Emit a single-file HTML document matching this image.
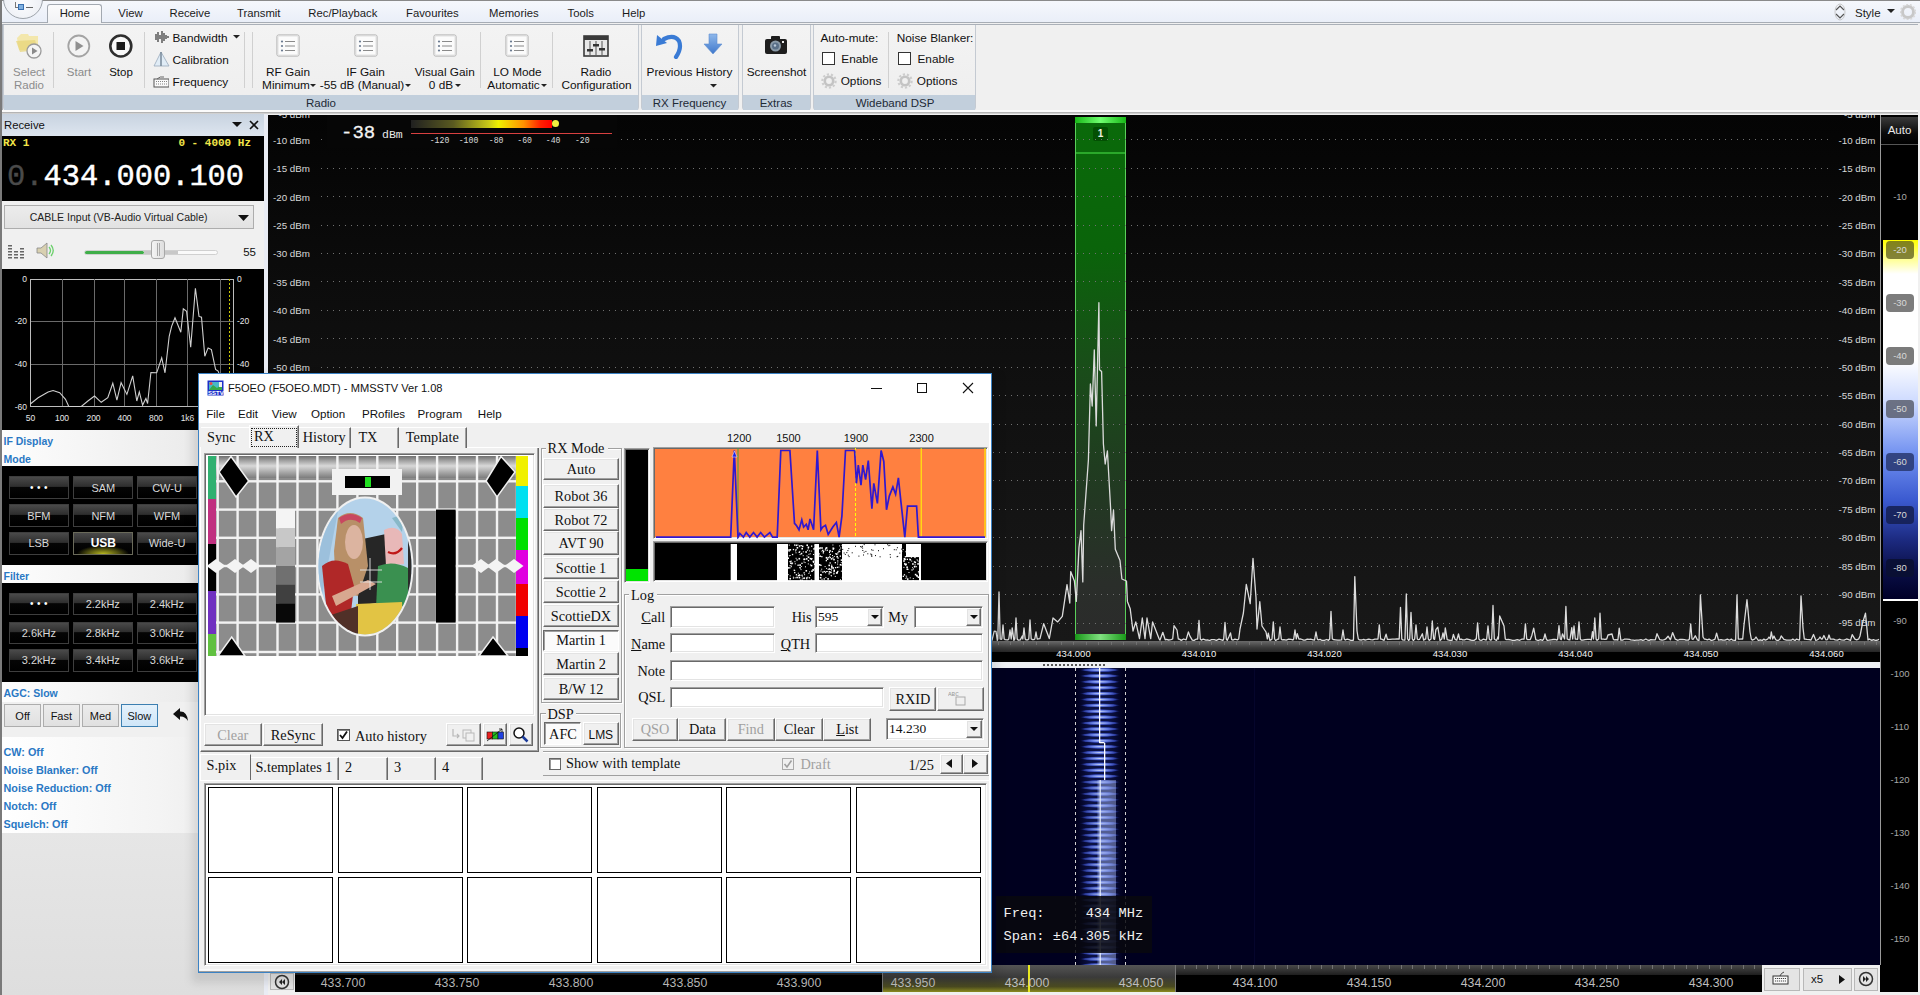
<!DOCTYPE html><html><head><meta charset="utf-8"><style>
html,body{margin:0;padding:0}
body{width:1920px;height:995px;overflow:hidden;position:relative;background:#f0f0f0;font-family:"Liberation Sans",sans-serif;}
div{position:absolute;box-sizing:border-box}
span{position:static}
</style></head><body>
<div style="left:0px;top:0px;width:1920px;height:23px;background:linear-gradient(#f6f8fc,#e9eef8);"></div>
<div style="left:0px;top:0px;width:1920px;height:1px;background:#8a8a8a;"></div>
<div style="left:0px;top:22px;width:1920px;height:1px;background:#a7adb5;"></div>
<div style="left:3px;top:-21px;width:40px;height:40px;border-radius:50%;border:1px solid #9da3aa;background:radial-gradient(circle at 50% 60%,#fbfcfe,#e6e9f0);box-sizing:border-box"></div>
<div style="left:15px;top:2px;width:9px;height:6px;border-left:1px solid #777;border-bottom:1px solid #777;"></div>
<div style="left:18px;top:4px;width:6px;height:6px;background:#7fb0e0;border:1px solid #3a70b0;"></div>
<div style="left:26px;top:7px;width:7px;height:1px;background:#666;"></div>
<div style="left:47px;top:4px;width:55px;height:20px;background:linear-gradient(#fbfbfc,#f1f2f4);border:1px solid #a3a9b1;border-bottom:none;border-radius:3px 3px 0 0;"></div>
<div style="left:-75.25px;top:3.0px;width:300px;height:20px;line-height:20px;font-size:11.3px;text-align:center;white-space:nowrap;color:#1b1b1b;">Home</div>
<div style="left:-19.5px;top:3.0px;width:300px;height:20px;line-height:20px;font-size:11.3px;text-align:center;white-space:nowrap;color:#1b1b1b;">View</div>
<div style="left:39.900000000000006px;top:3.0px;width:300px;height:20px;line-height:20px;font-size:11.3px;text-align:center;white-space:nowrap;color:#1b1b1b;">Receive</div>
<div style="left:108.75px;top:3.0px;width:300px;height:20px;line-height:20px;font-size:11.3px;text-align:center;white-space:nowrap;color:#1b1b1b;">Transmit</div>
<div style="left:192.89999999999998px;top:3.0px;width:300px;height:20px;line-height:20px;font-size:11.3px;text-align:center;white-space:nowrap;color:#1b1b1b;">Rec/Playback</div>
<div style="left:282.4px;top:3.0px;width:300px;height:20px;line-height:20px;font-size:11.3px;text-align:center;white-space:nowrap;color:#1b1b1b;">Favourites</div>
<div style="left:363.79999999999995px;top:3.0px;width:300px;height:20px;line-height:20px;font-size:11.3px;text-align:center;white-space:nowrap;color:#1b1b1b;">Memories</div>
<div style="left:430.79999999999995px;top:3.0px;width:300px;height:20px;line-height:20px;font-size:11.3px;text-align:center;white-space:nowrap;color:#1b1b1b;">Tools</div>
<div style="left:483.70000000000005px;top:3.0px;width:300px;height:20px;line-height:20px;font-size:11.3px;text-align:center;white-space:nowrap;color:#1b1b1b;">Help</div>
<svg style="position:absolute;left:1834px;top:3px;" width="12" height="18" viewBox="0 0 12 18"><path d="M2 7 L6 3 L10 7" fill="none" stroke="#555" stroke-width="1.2"/><path d="M2 11 L6 15 L10 11" fill="none" stroke="#555" stroke-width="1.2"/><ellipse cx="6" cy="9" rx="5" ry="8" fill="none" stroke="#bbb" stroke-width="0.8"/></svg>
<div style="left:1855px;top:2.5px;height:20px;line-height:20px;font-size:11.5px;white-space:nowrap;color:#1b1b1b;">Style</div>
<svg style="position:absolute;left:1887px;top:9px;" width="8" height="5" viewBox="0 0 8 5"><path d="M0 0 L8 0 L4 4 Z" fill="#222"/></svg>
<svg style="position:absolute;left:1900px;top:4px;" width="16" height="16" viewBox="0 0 16 16"><circle cx="8" cy="8" r="5.5" fill="none" stroke="#c8c8c8" stroke-width="3"/><circle cx="8" cy="8" r="7.5" fill="none" stroke="#d8d8d8" stroke-width="1.5" stroke-dasharray="2 1.7"/></svg>
<div style="left:1px;top:23px;width:1918px;height:89px;background:#f0f0f0;"></div>
<div style="left:2px;top:24px;width:1916px;height:1px;background:#aab0b8;"></div>
<div style="left:2px;top:24px;width:1px;height:88px;background:#aab0b8;"></div>
<div style="left:2px;top:110px;width:1916px;height:2px;background:#fbfbfb;"></div>
<div style="left:2px;top:112px;width:1916px;height:1px;background:#b4b4b4;"></div>
<div style="left:2px;top:113px;width:1916px;height:1px;background:#d0d0d0;"></div>
<div style="left:3px;top:25px;width:635.6px;height:85px;border:1px solid #c4cad2;border-top:none;border-radius:0 0 3px 3px;background:linear-gradient(#f3f3f3,#eeeeee);"></div>
<div style="left:4px;top:95px;width:633.6px;height:14.5px;background:#c2cfdc;"></div>
<div style="left:171.0px;top:93.0px;width:300px;height:20px;line-height:20px;font-size:11.5px;text-align:center;white-space:nowrap;color:#1e2a36;">Radio</div>
<div style="left:641px;top:25px;width:97.5px;height:85px;border:1px solid #c4cad2;border-top:none;border-radius:0 0 3px 3px;background:linear-gradient(#f3f3f3,#eeeeee);"></div>
<div style="left:642px;top:95px;width:95.5px;height:14.5px;background:#c2cfdc;"></div>
<div style="left:539.5px;top:93.0px;width:300px;height:20px;line-height:20px;font-size:11.5px;text-align:center;white-space:nowrap;color:#1e2a36;">RX Frequency</div>
<div style="left:741.5px;top:25px;width:69.0px;height:85px;border:1px solid #c4cad2;border-top:none;border-radius:0 0 3px 3px;background:linear-gradient(#f3f3f3,#eeeeee);"></div>
<div style="left:742.5px;top:95px;width:67.0px;height:14.5px;background:#c2cfdc;"></div>
<div style="left:626.0px;top:93.0px;width:300px;height:20px;line-height:20px;font-size:11.5px;text-align:center;white-space:nowrap;color:#1e2a36;">Extras</div>
<div style="left:813.3px;top:25px;width:162.5px;height:85px;border:1px solid #c4cad2;border-top:none;border-radius:0 0 3px 3px;background:linear-gradient(#f3f3f3,#eeeeee);"></div>
<div style="left:814.3px;top:95px;width:160.5px;height:14.5px;background:#c2cfdc;"></div>
<div style="left:745.0px;top:93.0px;width:300px;height:20px;line-height:20px;font-size:11.5px;text-align:center;white-space:nowrap;color:#1e2a36;">Wideband DSP</div>
<div style="left:53px;top:32px;width:1px;height:56px;background:#d0d0d0;"></div>
<div style="left:144px;top:32px;width:1px;height:56px;background:#d0d0d0;"></div>
<div style="left:244px;top:32px;width:1px;height:56px;background:#d0d0d0;"></div>
<div style="left:252px;top:32px;width:1px;height:56px;background:#d0d0d0;"></div>
<div style="left:480px;top:32px;width:1px;height:56px;background:#d0d0d0;"></div>
<div style="left:552px;top:32px;width:1px;height:56px;background:#d0d0d0;"></div>
<svg style="position:absolute;left:15px;top:30px;" width="28" height="30" viewBox="0 0 28 30"><path d="M2 8 L6 4 L13 4 L14 6 L23 6 L23 20 L4 20 Z" fill="#f2e49a" opacity="0.8"/><path d="M1 11 L20 10 L23 20 L5 22 Z" fill="#e8d67a" opacity="0.75"/><circle cx="19" cy="21" r="7" fill="#f4f4f4" stroke="#9a9a9a" stroke-width="1.3"/><path d="M17 17.5 L22.5 21 L17 24.5 Z" fill="#8a8a8a"/></svg>
<div style="left:-121.0px;top:62.0px;width:300px;height:20px;line-height:20px;font-size:11.5px;text-align:center;white-space:nowrap;color:#8c8c8c;">Select</div>
<div style="left:-121.0px;top:75.0px;width:300px;height:20px;line-height:20px;font-size:11.5px;text-align:center;white-space:nowrap;color:#8c8c8c;">Radio</div>
<svg style="position:absolute;left:66px;top:34px;" width="26" height="26" viewBox="0 0 26 26"><circle cx="12.8" cy="12" r="10.5" fill="#f4f4f4" stroke="#a4a4a4" stroke-width="1.8"/><path d="M9.5 7 L17.5 12 L9.5 17 Z" fill="#909090"/></svg>
<div style="left:-71.0px;top:62.0px;width:300px;height:20px;line-height:20px;font-size:11.5px;text-align:center;white-space:nowrap;color:#8a8a8a;">Start</div>
<svg style="position:absolute;left:108px;top:34px;" width="26" height="26" viewBox="0 0 26 26"><circle cx="12.8" cy="12" r="10.5" fill="#f8f8f8" stroke="#2e2e2e" stroke-width="2.6"/><rect x="8.5" y="8" width="8.5" height="8" fill="#1a1a1a"/></svg>
<div style="left:-29.0px;top:62.0px;width:300px;height:20px;line-height:20px;font-size:11.5px;text-align:center;white-space:nowrap;color:#111;">Stop</div>
<svg style="position:absolute;left:153px;top:30px;" width="17" height="14" viewBox="0 0 17 14"><path d="M1 7 V7 M3 4 V10 M5 2 V12 M7 5 V9 M9 1 V13 M11 3 V11 M13 5 V9 M15 6 V8" stroke="#333" stroke-width="1.2"/></svg>
<div style="left:172.5px;top:28.0px;height:20px;line-height:20px;font-size:11.8px;white-space:nowrap;color:#111;">Bandwidth</div>
<svg style="position:absolute;left:233px;top:35px;" width="7" height="4" viewBox="0 0 7 4"><path d="M0 0 L7 0 L3.5 3.5 Z" fill="#222"/></svg>
<svg style="position:absolute;left:153px;top:51px;" width="17" height="17" viewBox="0 0 17 17"><path d="M8 1 L1 15 L16 15 Z" fill="#e0ecf6" stroke="#9ab" stroke-width="0.8"/><path d="M8 1 L8 15" stroke="#789" stroke-width="1.5"/></svg>
<div style="left:172.5px;top:49.7px;height:20px;line-height:20px;font-size:11.8px;white-space:nowrap;color:#111;">Calibration</div>
<svg style="position:absolute;left:153px;top:75px;" width="16" height="13" viewBox="0 0 16 13"><rect x="1" y="4" width="15" height="8" fill="#fafafa" stroke="#555" stroke-width="1"/><path d="M3 6.5 H14 M3 9 H14" stroke="#777" stroke-width="0.9" stroke-dasharray="1 1"/><path d="M4 4 Q7 1 11 2" stroke="#666" fill="none"/></svg>
<div style="left:172.5px;top:71.8px;height:20px;line-height:20px;font-size:11.8px;white-space:nowrap;color:#111;">Frequency</div>
<svg style="position:absolute;left:276px;top:34px;" width="25" height="24" viewBox="0 0 25 24"><rect x="1" y="1" width="22" height="21" rx="1.5" fill="#fbfbfb" stroke="#a8a8a8" stroke-width="1"/><rect x="2" y="2" width="20" height="19" fill="none" stroke="#e2e2e2"/><circle cx="6" cy="7.5" r="1.1" fill="#6a7a90"/><circle cx="6" cy="12" r="1.1" fill="#6a7a90"/><circle cx="6" cy="16.5" r="1.1" fill="#6a7a90"/><path d="M9 7.5 H19 M9 12 H19 M9 16.5 H19" stroke="#8a8a8a" stroke-width="1"/></svg>
<svg style="position:absolute;left:354px;top:34px;" width="25" height="24" viewBox="0 0 25 24"><rect x="1" y="1" width="22" height="21" rx="1.5" fill="#fbfbfb" stroke="#a8a8a8" stroke-width="1"/><rect x="2" y="2" width="20" height="19" fill="none" stroke="#e2e2e2"/><circle cx="6" cy="7.5" r="1.1" fill="#6a7a90"/><circle cx="6" cy="12" r="1.1" fill="#6a7a90"/><circle cx="6" cy="16.5" r="1.1" fill="#6a7a90"/><path d="M9 7.5 H19 M9 12 H19 M9 16.5 H19" stroke="#8a8a8a" stroke-width="1"/></svg>
<svg style="position:absolute;left:433px;top:34px;" width="25" height="24" viewBox="0 0 25 24"><rect x="1" y="1" width="22" height="21" rx="1.5" fill="#fbfbfb" stroke="#a8a8a8" stroke-width="1"/><rect x="2" y="2" width="20" height="19" fill="none" stroke="#e2e2e2"/><circle cx="6" cy="7.5" r="1.1" fill="#6a7a90"/><circle cx="6" cy="12" r="1.1" fill="#6a7a90"/><circle cx="6" cy="16.5" r="1.1" fill="#6a7a90"/><path d="M9 7.5 H19 M9 12 H19 M9 16.5 H19" stroke="#8a8a8a" stroke-width="1"/></svg>
<svg style="position:absolute;left:505px;top:34px;" width="25" height="24" viewBox="0 0 25 24"><rect x="1" y="1" width="22" height="21" rx="1.5" fill="#fbfbfb" stroke="#a8a8a8" stroke-width="1"/><rect x="2" y="2" width="20" height="19" fill="none" stroke="#e2e2e2"/><circle cx="6" cy="7.5" r="1.1" fill="#6a7a90"/><circle cx="6" cy="12" r="1.1" fill="#6a7a90"/><circle cx="6" cy="16.5" r="1.1" fill="#6a7a90"/><path d="M9 7.5 H19 M9 12 H19 M9 16.5 H19" stroke="#8a8a8a" stroke-width="1"/></svg>
<div style="left:138.0px;top:62.0px;width:300px;height:20px;line-height:20px;font-size:11.8px;text-align:center;white-space:nowrap;color:#111;">RF Gain</div>
<div style="left:136.0px;top:75.0px;width:300px;height:20px;line-height:20px;font-size:11.8px;text-align:center;white-space:nowrap;color:#111;">Minimum</div>
<svg style="position:absolute;left:310px;top:83.5px;" width="6" height="4" viewBox="0 0 6 4"><path d="M0 0 L6 0 L3 3 Z" fill="#222"/></svg>
<div style="left:215.5px;top:62.0px;width:300px;height:20px;line-height:20px;font-size:11.8px;text-align:center;white-space:nowrap;color:#111;">IF Gain</div>
<div style="left:212.0px;top:75.0px;width:300px;height:20px;line-height:20px;font-size:11.8px;text-align:center;white-space:nowrap;color:#111;">-55 dB (Manual)</div>
<svg style="position:absolute;left:404.5px;top:83.5px;" width="6" height="4" viewBox="0 0 6 4"><path d="M0 0 L6 0 L3 3 Z" fill="#222"/></svg>
<div style="left:294.7px;top:62.0px;width:300px;height:20px;line-height:20px;font-size:11.8px;text-align:center;white-space:nowrap;color:#111;">Visual Gain</div>
<div style="left:291.0px;top:75.0px;width:300px;height:20px;line-height:20px;font-size:11.8px;text-align:center;white-space:nowrap;color:#111;">0 dB</div>
<svg style="position:absolute;left:455px;top:83.5px;" width="6" height="4" viewBox="0 0 6 4"><path d="M0 0 L6 0 L3 3 Z" fill="#222"/></svg>
<div style="left:367.4px;top:62.0px;width:300px;height:20px;line-height:20px;font-size:11.8px;text-align:center;white-space:nowrap;color:#111;">LO Mode</div>
<div style="left:363.5px;top:75.0px;width:300px;height:20px;line-height:20px;font-size:11.8px;text-align:center;white-space:nowrap;color:#111;">Automatic</div>
<svg style="position:absolute;left:540.5px;top:83.5px;" width="6" height="4" viewBox="0 0 6 4"><path d="M0 0 L6 0 L3 3 Z" fill="#222"/></svg>
<svg style="position:absolute;left:583px;top:35px;" width="26" height="24" viewBox="0 0 26 24"><rect x="1" y="1" width="24" height="20" fill="#e8e8e8" stroke="#3a3a3a" stroke-width="1.6"/><rect x="1" y="1" width="24" height="4" fill="#3a3a3a"/><path d="M7 6 V20 M13 6 V20 M19 6 V20" stroke="#555" stroke-width="1"/><rect x="4" y="14" width="6" height="2.5" fill="#333"/><rect x="10" y="9" width="6" height="2.5" fill="#333"/><rect x="16" y="13" width="6" height="2.5" fill="#333"/></svg>
<div style="left:446.0px;top:62.0px;width:300px;height:20px;line-height:20px;font-size:11.8px;text-align:center;white-space:nowrap;color:#111;">Radio</div>
<div style="left:446.5px;top:75.0px;width:300px;height:20px;line-height:20px;font-size:11.8px;text-align:center;white-space:nowrap;color:#111;">Configuration</div>
<svg style="position:absolute;left:655px;top:33px;" width="28" height="26" viewBox="0 0 28 26"><path d="M9 6 Q19 1 24 8 Q27 15 21 24" fill="none" stroke="#3a7bd5" stroke-width="4.2" stroke-linecap="round"/><path d="M1 13 L2 2 L12 10 Z" fill="#3a7bd5"/></svg>
<div style="left:519.5px;top:62.0px;width:300px;height:20px;line-height:20px;font-size:11.8px;text-align:center;white-space:nowrap;color:#111;">Previous</div>
<svg style="position:absolute;left:703px;top:33px;" width="21" height="24" viewBox="0 0 21 24"><defs><linearGradient id="ha" x1="0" x2="0" y1="0" y2="1"><stop offset="0" stop-color="#8fb8ea"/><stop offset="1" stop-color="#3f78cc"/></linearGradient></defs><path d="M6 1 H14 V11 H19 L10 21 L1 11 H6 Z" fill="url(#ha)" stroke="#5f8fd0" stroke-width="0.6"/></svg>
<div style="left:564.0px;top:62.0px;width:300px;height:20px;line-height:20px;font-size:11.8px;text-align:center;white-space:nowrap;color:#111;">History</div>
<svg style="position:absolute;left:710px;top:83.5px;" width="7" height="4" viewBox="0 0 7 4"><path d="M0 0 L7 0 L3.5 3.5 Z" fill="#222"/></svg>
<svg style="position:absolute;left:764px;top:35px;" width="24" height="20" viewBox="0 0 24 20"><rect x="1" y="4" width="22" height="15" rx="2" fill="#1e1e1e"/><rect x="7" y="1" width="9" height="4" rx="1" fill="#1e1e1e"/><circle cx="11.5" cy="11" r="5.5" fill="#8a9aa8"/><circle cx="11.5" cy="11" r="3.5" fill="#5a7088"/><circle cx="11" cy="10.5" r="1.2" fill="#b8c8d8"/><rect x="18" y="6" width="2" height="2" fill="#eee"/></svg>
<div style="left:626.5px;top:62.0px;width:300px;height:20px;line-height:20px;font-size:11.8px;text-align:center;white-space:nowrap;color:#111;">Screenshot</div>
<div style="left:820.5px;top:28.200000000000003px;height:20px;line-height:20px;font-size:11.8px;white-space:nowrap;color:#111;">Auto-mute:</div>
<div style="left:896.7px;top:28.200000000000003px;height:20px;line-height:20px;font-size:11.8px;white-space:nowrap;color:#111;">Noise Blanker:</div>
<div style="left:822px;top:52px;width:13px;height:13px;background:#fff;border:1px solid #333;"></div>
<div style="left:898px;top:52px;width:13px;height:13px;background:#fff;border:1px solid #333;"></div>
<div style="left:841.3px;top:49.0px;height:20px;line-height:20px;font-size:11.8px;white-space:nowrap;color:#111;">Enable</div>
<div style="left:917.5px;top:49.0px;height:20px;line-height:20px;font-size:11.8px;white-space:nowrap;color:#111;">Enable</div>
<svg style="position:absolute;left:821px;top:73px;" width="16" height="16" viewBox="0 0 16 16"><circle cx="8" cy="8" r="4.2" fill="none" stroke="#c4c4c4" stroke-width="2.6"/><circle cx="8" cy="8" r="6.6" fill="none" stroke="#cdcdcd" stroke-width="2.2" stroke-dasharray="2.2 1.9"/></svg>
<svg style="position:absolute;left:897px;top:73px;" width="16" height="16" viewBox="0 0 16 16"><circle cx="8" cy="8" r="4.2" fill="none" stroke="#c4c4c4" stroke-width="2.6"/><circle cx="8" cy="8" r="6.6" fill="none" stroke="#cdcdcd" stroke-width="2.2" stroke-dasharray="2.2 1.9"/></svg>
<div style="left:840.7px;top:71.2px;height:20px;line-height:20px;font-size:11.8px;white-space:nowrap;color:#111;">Options</div>
<div style="left:916.8px;top:71.2px;height:20px;line-height:20px;font-size:11.8px;white-space:nowrap;color:#111;">Options</div>
<div style="left:888px;top:32px;width:1px;height:56px;background:#d0d0d0;"></div>
<div style="left:0px;top:0px;width:2px;height:995px;background:#7a7a7a;"></div>
<div style="left:2px;top:114px;width:262px;height:22px;background:linear-gradient(#c8d3e0,#dde5ef);"></div>
<div style="left:4px;top:115.0px;height:20px;line-height:20px;font-size:11.3px;white-space:nowrap;color:#111;">Receive</div>
<svg style="position:absolute;left:232px;top:122px;" width="10" height="6" viewBox="0 0 10 6"><path d="M0 0 L10 0 L5 5 Z" fill="#111"/></svg>
<svg style="position:absolute;left:249px;top:120px;" width="10" height="10" viewBox="0 0 10 10"><path d="M1 1 L9 9 M9 1 L1 9" stroke="#111" stroke-width="1.6"/></svg>
<div style="left:264px;top:114px;width:4px;height:881px;background:#e9ecf4;"></div>
<div style="left:2px;top:136px;width:262px;height:65px;background:#000;"></div>
<div style="left:3px;top:133.4px;height:20px;line-height:20px;font-size:11px;white-space:nowrap;color:#f2e64a;font-family:Liberation Mono;font-weight:bold;">RX 1</div>
<div style="left:-49px;top:133.4px;width:300px;height:20px;line-height:20px;font-size:11px;text-align:right;white-space:nowrap;color:#f2e64a;font-family:Liberation Mono;font-weight:bold;">0 - 4000 Hz</div>
<div style="left:7px;top:159.3px;height:36px;line-height:36px;font-size:30.4px;white-space:nowrap;color:#fff;font-family:Liberation Mono;-webkit-text-stroke:0.45px #fff;"><span style="color:#4a4a4a;-webkit-text-stroke:0.4px #4a4a4a">0.</span>434.000.100</div>
<div style="left:2px;top:201px;width:262px;height:68px;background:#f0f0f0;"></div>
<div style="left:4px;top:205px;width:250px;height:24px;background:linear-gradient(#ececec,#e2e2e2);border:1px solid #adadad;"></div>
<div style="left:-31.400000000000006px;top:207.0px;width:300px;height:20px;line-height:20px;font-size:10.5px;text-align:center;white-space:nowrap;color:#222;">CABLE Input (VB-Audio Virtual Cable)</div>
<svg style="position:absolute;left:238px;top:215px;" width="11" height="7" viewBox="0 0 11 7"><path d="M0 0 L11 0 L5.5 6 Z" fill="#111"/></svg>
<svg style="position:absolute;left:8px;top:244px;" width="17" height="15" viewBox="0 0 17 15"><g fill="#666"><rect x="0" y="1" width="4" height="1.5"/><rect x="0" y="4" width="4" height="1.5"/><rect x="0" y="7" width="4" height="1.5"/><rect x="0" y="10" width="4" height="1.5"/><rect x="0" y="13" width="4" height="1.5"/><rect x="6" y="7" width="4" height="1.5"/><rect x="6" y="10" width="4" height="1.5"/><rect x="6" y="13" width="4" height="1.5"/><rect x="12" y="4" width="4" height="1.5"/><rect x="12" y="7" width="4" height="1.5"/><rect x="12" y="10" width="4" height="1.5"/><rect x="12" y="13" width="4" height="1.5"/></g></svg>
<svg style="position:absolute;left:36px;top:242px;" width="20" height="17" viewBox="0 0 20 17"><path d="M1 6 H5 L11 1 V16 L5 11 H1 Z" fill="#d8d0b0" stroke="#888" stroke-width="0.8"/><path d="M13 5 Q16 8.5 13 12 M15 3 Q19.5 8.5 15 14" fill="none" stroke="#6cd06c" stroke-width="1.3"/></svg>
<div style="left:84px;top:250px;width:134px;height:5px;background:#fafafa;border:1px solid #d0d0d0;border-radius:3px;"></div>
<div style="left:85px;top:251px;width:59px;height:3px;background:#3fae49;border-radius:2px;"></div>
<div style="left:144px;top:251px;width:34px;height:3px;background:#c8c8c8;"></div>
<div style="left:151px;top:240px;width:14px;height:19px;background:linear-gradient(90deg,#f4f4f4,#dedede);border:1px solid #a8a8a8;border-radius:3px;"></div>
<div style="left:157px;top:243px;width:1px;height:13px;background:#aaa;"></div>
<div style="left:159px;top:243px;width:1px;height:13px;background:#aaa;"></div>
<div style="left:-44px;top:242.0px;width:300px;height:20px;line-height:20px;font-size:11.5px;text-align:right;white-space:nowrap;color:#111;">55</div>
<div style="left:2px;top:269px;width:262px;height:161px;background:#000;"></div>
<div style="left:30px;top:278.5px;width:204px;height:128px;border:1px solid #bdbdbd;"></div>
<div style="left:62px;top:279px;width:1px;height:127px;background:#6a6a6a;"></div>
<div style="left:94px;top:279px;width:1px;height:127px;background:#6a6a6a;"></div>
<div style="left:124px;top:279px;width:1px;height:127px;background:#6a6a6a;"></div>
<div style="left:156px;top:279px;width:1px;height:127px;background:#6a6a6a;"></div>
<div style="left:187px;top:279px;width:1px;height:127px;background:#6a6a6a;"></div>
<div style="left:220px;top:279px;width:1px;height:127px;background:#6a6a6a;"></div>
<div style="left:31px;top:321px;width:202px;height:1px;background:#6a6a6a;"></div>
<div style="left:31px;top:364px;width:202px;height:1px;background:#6a6a6a;"></div>
<div style="left:229px;top:279px;width:1px;height:127px;background:repeating-linear-gradient(#c8c800 0 2px,transparent 2px 4px);"></div>
<div style="left:-273px;top:268.6px;width:300px;height:20px;line-height:20px;font-size:8.5px;text-align:right;white-space:nowrap;color:#e8e8e8;">0</div>
<div style="left:237px;top:268.6px;height:20px;line-height:20px;font-size:8.5px;white-space:nowrap;color:#e8e8e8;">0</div>
<div style="left:-273px;top:311.4px;width:300px;height:20px;line-height:20px;font-size:8.5px;text-align:right;white-space:nowrap;color:#e8e8e8;">-20</div>
<div style="left:237px;top:311.4px;height:20px;line-height:20px;font-size:8.5px;white-space:nowrap;color:#e8e8e8;">-20</div>
<div style="left:-273px;top:354.0px;width:300px;height:20px;line-height:20px;font-size:8.5px;text-align:right;white-space:nowrap;color:#e8e8e8;">-40</div>
<div style="left:237px;top:354.0px;height:20px;line-height:20px;font-size:8.5px;white-space:nowrap;color:#e8e8e8;">-40</div>
<div style="left:-273px;top:396.5px;width:300px;height:20px;line-height:20px;font-size:8.5px;text-align:right;white-space:nowrap;color:#e8e8e8;">-60</div>
<div style="left:237px;top:396.5px;height:20px;line-height:20px;font-size:8.5px;white-space:nowrap;color:#e8e8e8;">-60</div>
<div style="left:10.5px;top:408.4px;width:40px;height:20px;line-height:20px;font-size:8.5px;text-align:center;white-space:nowrap;color:#e8e8e8;">50</div>
<div style="left:42.0px;top:408.4px;width:40px;height:20px;line-height:20px;font-size:8.5px;text-align:center;white-space:nowrap;color:#e8e8e8;">100</div>
<div style="left:73.5px;top:408.4px;width:40px;height:20px;line-height:20px;font-size:8.5px;text-align:center;white-space:nowrap;color:#e8e8e8;">200</div>
<div style="left:104.5px;top:408.4px;width:40px;height:20px;line-height:20px;font-size:8.5px;text-align:center;white-space:nowrap;color:#e8e8e8;">400</div>
<div style="left:136.0px;top:408.4px;width:40px;height:20px;line-height:20px;font-size:8.5px;text-align:center;white-space:nowrap;color:#e8e8e8;">800</div>
<div style="left:167.5px;top:408.4px;width:40px;height:20px;line-height:20px;font-size:8.5px;text-align:center;white-space:nowrap;color:#e8e8e8;">1k6</div>
<svg style="position:absolute;left:2px;top:269px;" width="262" height="161" viewBox="0 0 262 161"><polyline points="28.3,135.0 36.1,128.7 46.1,122.9 51.1,121.5 57.7,123.7 63.5,130.3 66.8,137.5 79.3,137.5 85.9,132.0 92.5,127.0 99.2,133.3 105.8,128.7 110.8,114.2 114.9,131.2 119.1,113.7 124.9,125.4 130.7,106.8 134.8,132.0 137.3,122.9 140.6,136.1 143.9,129.5 145.6,134.5 148.9,103.5 154.7,103.8 159.7,88.9 163.0,103.8 167.2,67.3 169.6,57.4 173.0,48.7 178.8,63.2 181.3,39.9 184.6,42.4 188.7,78.1 193.4,19.2 197.0,47.4 199.5,48.2 202.8,87.2 206.1,78.9 209.4,80.6 213.6,100.5 216.1,102.1 218.6,108.8 223.5,122.0 228.5,135.3" fill="none" stroke="#d0d0d0" stroke-width="1.1"/></svg>
<div style="left:2px;top:430px;width:262px;height:36px;background:linear-gradient(90deg,#fdfdfd,#ececec 70%,#d8d8d8);"></div>
<div style="left:3.5px;top:431.3px;height:20px;line-height:20px;font-size:10.5px;white-space:nowrap;color:#2a78c4;font-weight:bold;">IF Display</div>
<div style="left:3.5px;top:449.0px;height:20px;line-height:20px;font-size:10.5px;white-space:nowrap;color:#2a78c4;font-weight:bold;">Mode</div>
<div style="left:2px;top:466px;width:262px;height:99px;background:#000;"></div>
<div style="left:8.8px;top:476.3px;width:60px;height:22.5px;border:1px solid #3e3e3e;background:linear-gradient(#4a4a4a 0%,#2e2e2e 45%,#050505 48%,#000 100%);"></div>
<div style="left:8.799999999999997px;top:477.55px;width:60px;height:20px;line-height:20px;font-size:11px;text-align:center;white-space:nowrap;color:#d8d8d8;color:#fff;font-size:10px;letter-spacing:3.5px;text-indent:3.5px;">•••</div>
<div style="left:73.3px;top:476.3px;width:60px;height:22.5px;border:1px solid #3e3e3e;background:linear-gradient(#4a4a4a 0%,#2e2e2e 45%,#050505 48%,#000 100%);"></div>
<div style="left:73.3px;top:477.55px;width:60px;height:20px;line-height:20px;font-size:11px;text-align:center;white-space:nowrap;color:#d8d8d8;">SAM</div>
<div style="left:137px;top:476.3px;width:60px;height:22.5px;border:1px solid #3e3e3e;background:linear-gradient(#4a4a4a 0%,#2e2e2e 45%,#050505 48%,#000 100%);"></div>
<div style="left:137.0px;top:477.55px;width:60px;height:20px;line-height:20px;font-size:11px;text-align:center;white-space:nowrap;color:#d8d8d8;">CW-U</div>
<div style="left:8.8px;top:504.4px;width:60px;height:22.5px;border:1px solid #3e3e3e;background:linear-gradient(#4a4a4a 0%,#2e2e2e 45%,#050505 48%,#000 100%);"></div>
<div style="left:8.799999999999997px;top:505.65px;width:60px;height:20px;line-height:20px;font-size:11px;text-align:center;white-space:nowrap;color:#d8d8d8;">BFM</div>
<div style="left:73.3px;top:504.4px;width:60px;height:22.5px;border:1px solid #3e3e3e;background:linear-gradient(#4a4a4a 0%,#2e2e2e 45%,#050505 48%,#000 100%);"></div>
<div style="left:73.3px;top:505.65px;width:60px;height:20px;line-height:20px;font-size:11px;text-align:center;white-space:nowrap;color:#d8d8d8;">NFM</div>
<div style="left:137px;top:504.4px;width:60px;height:22.5px;border:1px solid #3e3e3e;background:linear-gradient(#4a4a4a 0%,#2e2e2e 45%,#050505 48%,#000 100%);"></div>
<div style="left:137.0px;top:505.65px;width:60px;height:20px;line-height:20px;font-size:11px;text-align:center;white-space:nowrap;color:#d8d8d8;">WFM</div>
<div style="left:8.8px;top:532.2px;width:60px;height:22.5px;border:1px solid #3e3e3e;background:linear-gradient(#4a4a4a 0%,#2e2e2e 45%,#050505 48%,#000 100%);"></div>
<div style="left:8.799999999999997px;top:533.45px;width:60px;height:20px;line-height:20px;font-size:11px;text-align:center;white-space:nowrap;color:#d8d8d8;">LSB</div>
<div style="left:73.3px;top:532.2px;width:60px;height:22.5px;border:1px solid #3e3e3e;background:linear-gradient(#4a4a4a 0%,#2e2e2e 45%,#050505 48%,#000 100%);background:radial-gradient(ellipse 45% 40% at 50% 100%,#b8b820,#505010 60%,transparent 100%),linear-gradient(#4a4a4a 0%,#2e2e2e 45%,#050505 48%,#000 100%);border-color:#6a6a5a;"></div>
<div style="left:73.3px;top:533.45px;width:60px;height:20px;line-height:20px;font-size:11px;text-align:center;white-space:nowrap;color:#d8d8d8;color:#fff;font-weight:bold;font-size:12px;">USB</div>
<div style="left:137px;top:532.2px;width:60px;height:22.5px;border:1px solid #3e3e3e;background:linear-gradient(#4a4a4a 0%,#2e2e2e 45%,#050505 48%,#000 100%);"></div>
<div style="left:137.0px;top:533.45px;width:60px;height:20px;line-height:20px;font-size:11px;text-align:center;white-space:nowrap;color:#d8d8d8;">Wide-U</div>
<div style="left:2px;top:565px;width:262px;height:18px;background:linear-gradient(90deg,#fdfdfd,#ececec 70%,#d8d8d8);"></div>
<div style="left:3.5px;top:566.0px;height:20px;line-height:20px;font-size:10.5px;white-space:nowrap;color:#2a78c4;font-weight:bold;">Filter</div>
<div style="left:2px;top:583px;width:262px;height:99px;background:#000;"></div>
<div style="left:9.1px;top:592.8px;width:59.5px;height:22.5px;border:1px solid #3e3e3e;background:linear-gradient(#4a4a4a 0%,#2e2e2e 45%,#050505 48%,#000 100%);"></div>
<div style="left:9.100000000000001px;top:594.05px;width:59.5px;height:20px;line-height:20px;font-size:11px;text-align:center;white-space:nowrap;color:#d8d8d8;color:#fff;font-size:10px;letter-spacing:3.5px;text-indent:3.5px;">•••</div>
<div style="left:73px;top:592.8px;width:59.5px;height:22.5px;border:1px solid #3e3e3e;background:linear-gradient(#4a4a4a 0%,#2e2e2e 45%,#050505 48%,#000 100%);"></div>
<div style="left:73.0px;top:594.05px;width:59.5px;height:20px;line-height:20px;font-size:11px;text-align:center;white-space:nowrap;color:#d8d8d8;">2.2kHz</div>
<div style="left:137.2px;top:592.8px;width:59.5px;height:22.5px;border:1px solid #3e3e3e;background:linear-gradient(#4a4a4a 0%,#2e2e2e 45%,#050505 48%,#000 100%);"></div>
<div style="left:137.2px;top:594.05px;width:59.5px;height:20px;line-height:20px;font-size:11px;text-align:center;white-space:nowrap;color:#d8d8d8;">2.4kHz</div>
<div style="left:9.1px;top:621.5px;width:59.5px;height:22.5px;border:1px solid #3e3e3e;background:linear-gradient(#4a4a4a 0%,#2e2e2e 45%,#050505 48%,#000 100%);"></div>
<div style="left:9.100000000000001px;top:622.75px;width:59.5px;height:20px;line-height:20px;font-size:11px;text-align:center;white-space:nowrap;color:#d8d8d8;">2.6kHz</div>
<div style="left:73px;top:621.5px;width:59.5px;height:22.5px;border:1px solid #3e3e3e;background:linear-gradient(#4a4a4a 0%,#2e2e2e 45%,#050505 48%,#000 100%);"></div>
<div style="left:73.0px;top:622.75px;width:59.5px;height:20px;line-height:20px;font-size:11px;text-align:center;white-space:nowrap;color:#d8d8d8;">2.8kHz</div>
<div style="left:137.2px;top:621.5px;width:59.5px;height:22.5px;border:1px solid #3e3e3e;background:linear-gradient(#4a4a4a 0%,#2e2e2e 45%,#050505 48%,#000 100%);"></div>
<div style="left:137.2px;top:622.75px;width:59.5px;height:20px;line-height:20px;font-size:11px;text-align:center;white-space:nowrap;color:#d8d8d8;">3.0kHz</div>
<div style="left:9.1px;top:649px;width:59.5px;height:22.5px;border:1px solid #3e3e3e;background:linear-gradient(#4a4a4a 0%,#2e2e2e 45%,#050505 48%,#000 100%);"></div>
<div style="left:9.100000000000001px;top:650.25px;width:59.5px;height:20px;line-height:20px;font-size:11px;text-align:center;white-space:nowrap;color:#d8d8d8;">3.2kHz</div>
<div style="left:73px;top:649px;width:59.5px;height:22.5px;border:1px solid #3e3e3e;background:linear-gradient(#4a4a4a 0%,#2e2e2e 45%,#050505 48%,#000 100%);"></div>
<div style="left:73.0px;top:650.25px;width:59.5px;height:20px;line-height:20px;font-size:11px;text-align:center;white-space:nowrap;color:#d8d8d8;">3.4kHz</div>
<div style="left:137.2px;top:649px;width:59.5px;height:22.5px;border:1px solid #3e3e3e;background:linear-gradient(#4a4a4a 0%,#2e2e2e 45%,#050505 48%,#000 100%);"></div>
<div style="left:137.2px;top:650.25px;width:59.5px;height:20px;line-height:20px;font-size:11px;text-align:center;white-space:nowrap;color:#d8d8d8;">3.6kHz</div>
<div style="left:2px;top:682px;width:262px;height:20px;background:linear-gradient(90deg,#fdfdfd,#ececec 70%,#d8d8d8);"></div>
<div style="left:3.5px;top:683.0px;height:20px;line-height:20px;font-size:10.5px;white-space:nowrap;color:#2a78c4;font-weight:bold;">AGC: Slow</div>
<div style="left:2px;top:702px;width:262px;height:35px;background:#f0f0f0;"></div>
<div style="left:4.4px;top:704.2px;width:36.4px;height:23.2px;background:linear-gradient(#ececec,#e0e0e0);border:1px solid #adadad;"></div>
<div style="left:2.599999999999998px;top:705.8px;width:40px;height:20px;line-height:20px;font-size:11px;text-align:center;white-space:nowrap;color:#111;">Off</div>
<div style="left:43px;top:704.2px;width:36.7px;height:23.2px;background:linear-gradient(#ececec,#e0e0e0);border:1px solid #adadad;"></div>
<div style="left:41.35px;top:705.8px;width:40px;height:20px;line-height:20px;font-size:11px;text-align:center;white-space:nowrap;color:#111;">Fast</div>
<div style="left:82.3px;top:704.2px;width:36.400000000000006px;height:23.2px;background:linear-gradient(#ececec,#e0e0e0);border:1px solid #adadad;"></div>
<div style="left:80.5px;top:705.8px;width:40px;height:20px;line-height:20px;font-size:11px;text-align:center;white-space:nowrap;color:#111;">Med</div>
<div style="left:121px;top:704.2px;width:36.8px;height:23.2px;background:linear-gradient(#e5f1fb,#cfe6f8);border:1px solid #3c7fb1;"></div>
<div style="left:119.4px;top:705.8px;width:40px;height:20px;line-height:20px;font-size:11px;text-align:center;white-space:nowrap;color:#111;">Slow</div>
<svg style="position:absolute;left:171px;top:707px;" width="20" height="16" viewBox="0 0 20 16"><path d="M2 7 L9 1 V4.5 Q16 4 17 14 Q14 9 9 9.5 V13 Z" fill="#111"/></svg>
<div style="left:2px;top:737px;width:262px;height:96px;background:linear-gradient(90deg,#ffffff,#f4f4f4 60%,#e8e8e8);"></div>
<div style="left:3.5px;top:741.5px;height:20px;line-height:20px;font-size:10.8px;white-space:nowrap;color:#2a78c4;font-weight:bold;">CW: Off</div>
<div style="left:3.5px;top:759.5px;height:20px;line-height:20px;font-size:10.8px;white-space:nowrap;color:#2a78c4;font-weight:bold;">Noise Blanker: Off</div>
<div style="left:3.5px;top:777.5px;height:20px;line-height:20px;font-size:10.8px;white-space:nowrap;color:#2a78c4;font-weight:bold;">Noise Reduction: Off</div>
<div style="left:3.5px;top:795.5px;height:20px;line-height:20px;font-size:10.8px;white-space:nowrap;color:#2a78c4;font-weight:bold;">Notch: Off</div>
<div style="left:3.5px;top:813.5px;height:20px;line-height:20px;font-size:10.8px;white-space:nowrap;color:#2a78c4;font-weight:bold;">Squelch: Off</div>
<div style="left:2px;top:833px;width:262px;height:162px;background:linear-gradient(#e6e6e6,#dedede);"></div>
<div style="left:268px;top:115px;width:1612px;height:526px;background:linear-gradient(#040404,#0e0e0e 40%,#181818);overflow:hidden;"></div>
<div style="left:1075px;top:117px;width:51px;height:523px;background:linear-gradient(#0a6a0a 0%,#0a640a 25%,#1a4c1a 49%,#203c20 67%,#2a2e2a 89%,#2b2b2b 100%);"></div>
<div style="left:1075px;top:117px;width:1px;height:523px;background:#5ad05a;"></div>
<div style="left:1125px;top:117px;width:1px;height:523px;background:#5ad05a;"></div>
<div style="left:1075px;top:117px;width:51px;height:6px;background:linear-gradient(90deg,#18b818,#70ff70 50%,#18b818);"></div>
<div style="left:1076px;top:152px;width:49px;height:2px;background:#2aa82a;"></div>
<div style="left:1093px;top:127px;width:15px;height:14px;background:#034f03;border-radius:2px;"></div>
<div style="left:1093.0px;top:124.0px;width:15px;height:20px;line-height:20px;font-size:10px;text-align:center;white-space:nowrap;color:#f0f0e0;font-weight:bold;">1</div>
<div style="left:1075px;top:634px;width:51px;height:6px;background:linear-gradient(90deg,#189818,#80e080 50%,#189818);"></div>
<div style="left:321px;top:139px;width:1509px;height:1px;background:repeating-linear-gradient(90deg,#707070 0 1px,transparent 1px 6px);"></div>
<div style="left:321px;top:168px;width:1509px;height:1px;background:repeating-linear-gradient(90deg,#707070 0 1px,transparent 1px 6px);"></div>
<div style="left:321px;top:196px;width:1509px;height:1px;background:repeating-linear-gradient(90deg,#707070 0 1px,transparent 1px 6px);"></div>
<div style="left:321px;top:225px;width:1509px;height:1px;background:repeating-linear-gradient(90deg,#707070 0 1px,transparent 1px 6px);"></div>
<div style="left:321px;top:253px;width:1509px;height:1px;background:repeating-linear-gradient(90deg,#707070 0 1px,transparent 1px 6px);"></div>
<div style="left:321px;top:281px;width:1509px;height:1px;background:repeating-linear-gradient(90deg,#707070 0 1px,transparent 1px 6px);"></div>
<div style="left:321px;top:310px;width:1509px;height:1px;background:repeating-linear-gradient(90deg,#707070 0 1px,transparent 1px 6px);"></div>
<div style="left:321px;top:338px;width:1509px;height:1px;background:repeating-linear-gradient(90deg,#707070 0 1px,transparent 1px 6px);"></div>
<div style="left:321px;top:367px;width:1509px;height:1px;background:repeating-linear-gradient(90deg,#707070 0 1px,transparent 1px 6px);"></div>
<div style="left:321px;top:395px;width:1509px;height:1px;background:repeating-linear-gradient(90deg,#707070 0 1px,transparent 1px 6px);"></div>
<div style="left:321px;top:424px;width:1509px;height:1px;background:repeating-linear-gradient(90deg,#707070 0 1px,transparent 1px 6px);"></div>
<div style="left:321px;top:452px;width:1509px;height:1px;background:repeating-linear-gradient(90deg,#707070 0 1px,transparent 1px 6px);"></div>
<div style="left:321px;top:480px;width:1509px;height:1px;background:repeating-linear-gradient(90deg,#707070 0 1px,transparent 1px 6px);"></div>
<div style="left:321px;top:509px;width:1509px;height:1px;background:repeating-linear-gradient(90deg,#707070 0 1px,transparent 1px 6px);"></div>
<div style="left:321px;top:537px;width:1509px;height:1px;background:repeating-linear-gradient(90deg,#707070 0 1px,transparent 1px 6px);"></div>
<div style="left:321px;top:566px;width:1509px;height:1px;background:repeating-linear-gradient(90deg,#707070 0 1px,transparent 1px 6px);"></div>
<div style="left:321px;top:594px;width:1509px;height:1px;background:repeating-linear-gradient(90deg,#707070 0 1px,transparent 1px 6px);"></div>
<div style="left:321px;top:623px;width:1509px;height:1px;background:repeating-linear-gradient(90deg,#707070 0 1px,transparent 1px 6px);"></div>
<div style="left:268px;top:115px;width:1612px;height:526px;overflow:hidden"><div style="left:-258px;top:-10.200000000000003px;width:300px;height:20px;line-height:20px;font-size:9.8px;text-align:right;color:#d8d8d8;white-space:nowrap">-5 dBm</div><div style="left:1307.5px;top:-10.200000000000003px;width:300px;height:20px;line-height:20px;font-size:9.8px;text-align:right;color:#d8d8d8;white-space:nowrap">-5 dBm</div><div style="left:-258px;top:15.800000000000011px;width:300px;height:20px;line-height:20px;font-size:9.8px;text-align:right;color:#d8d8d8;white-space:nowrap">-10 dBm</div><div style="left:1307.5px;top:15.800000000000011px;width:300px;height:20px;line-height:20px;font-size:9.8px;text-align:right;color:#d8d8d8;white-space:nowrap">-10 dBm</div><div style="left:-258px;top:44.19px;width:300px;height:20px;line-height:20px;font-size:9.8px;text-align:right;color:#d8d8d8;white-space:nowrap">-15 dBm</div><div style="left:1307.5px;top:44.19px;width:300px;height:20px;line-height:20px;font-size:9.8px;text-align:right;color:#d8d8d8;white-space:nowrap">-15 dBm</div><div style="left:-258px;top:72.58000000000001px;width:300px;height:20px;line-height:20px;font-size:9.8px;text-align:right;color:#d8d8d8;white-space:nowrap">-20 dBm</div><div style="left:1307.5px;top:72.58000000000001px;width:300px;height:20px;line-height:20px;font-size:9.8px;text-align:right;color:#d8d8d8;white-space:nowrap">-20 dBm</div><div style="left:-258px;top:100.97000000000003px;width:300px;height:20px;line-height:20px;font-size:9.8px;text-align:right;color:#d8d8d8;white-space:nowrap">-25 dBm</div><div style="left:1307.5px;top:100.97000000000003px;width:300px;height:20px;line-height:20px;font-size:9.8px;text-align:right;color:#d8d8d8;white-space:nowrap">-25 dBm</div><div style="left:-258px;top:129.36px;width:300px;height:20px;line-height:20px;font-size:9.8px;text-align:right;color:#d8d8d8;white-space:nowrap">-30 dBm</div><div style="left:1307.5px;top:129.36px;width:300px;height:20px;line-height:20px;font-size:9.8px;text-align:right;color:#d8d8d8;white-space:nowrap">-30 dBm</div><div style="left:-258px;top:157.75px;width:300px;height:20px;line-height:20px;font-size:9.8px;text-align:right;color:#d8d8d8;white-space:nowrap">-35 dBm</div><div style="left:1307.5px;top:157.75px;width:300px;height:20px;line-height:20px;font-size:9.8px;text-align:right;color:#d8d8d8;white-space:nowrap">-35 dBm</div><div style="left:-258px;top:186.14px;width:300px;height:20px;line-height:20px;font-size:9.8px;text-align:right;color:#d8d8d8;white-space:nowrap">-40 dBm</div><div style="left:1307.5px;top:186.14px;width:300px;height:20px;line-height:20px;font-size:9.8px;text-align:right;color:#d8d8d8;white-space:nowrap">-40 dBm</div><div style="left:-258px;top:214.53000000000003px;width:300px;height:20px;line-height:20px;font-size:9.8px;text-align:right;color:#d8d8d8;white-space:nowrap">-45 dBm</div><div style="left:1307.5px;top:214.53000000000003px;width:300px;height:20px;line-height:20px;font-size:9.8px;text-align:right;color:#d8d8d8;white-space:nowrap">-45 dBm</div><div style="left:-258px;top:242.92000000000002px;width:300px;height:20px;line-height:20px;font-size:9.8px;text-align:right;color:#d8d8d8;white-space:nowrap">-50 dBm</div><div style="left:1307.5px;top:242.92000000000002px;width:300px;height:20px;line-height:20px;font-size:9.8px;text-align:right;color:#d8d8d8;white-space:nowrap">-50 dBm</div><div style="left:-258px;top:271.31px;width:300px;height:20px;line-height:20px;font-size:9.8px;text-align:right;color:#d8d8d8;white-space:nowrap">-55 dBm</div><div style="left:1307.5px;top:271.31px;width:300px;height:20px;line-height:20px;font-size:9.8px;text-align:right;color:#d8d8d8;white-space:nowrap">-55 dBm</div><div style="left:-258px;top:299.7px;width:300px;height:20px;line-height:20px;font-size:9.8px;text-align:right;color:#d8d8d8;white-space:nowrap">-60 dBm</div><div style="left:1307.5px;top:299.7px;width:300px;height:20px;line-height:20px;font-size:9.8px;text-align:right;color:#d8d8d8;white-space:nowrap">-60 dBm</div><div style="left:-258px;top:328.09000000000003px;width:300px;height:20px;line-height:20px;font-size:9.8px;text-align:right;color:#d8d8d8;white-space:nowrap">-65 dBm</div><div style="left:1307.5px;top:328.09000000000003px;width:300px;height:20px;line-height:20px;font-size:9.8px;text-align:right;color:#d8d8d8;white-space:nowrap">-65 dBm</div><div style="left:-258px;top:356.48px;width:300px;height:20px;line-height:20px;font-size:9.8px;text-align:right;color:#d8d8d8;white-space:nowrap">-70 dBm</div><div style="left:1307.5px;top:356.48px;width:300px;height:20px;line-height:20px;font-size:9.8px;text-align:right;color:#d8d8d8;white-space:nowrap">-70 dBm</div><div style="left:-258px;top:384.87px;width:300px;height:20px;line-height:20px;font-size:9.8px;text-align:right;color:#d8d8d8;white-space:nowrap">-75 dBm</div><div style="left:1307.5px;top:384.87px;width:300px;height:20px;line-height:20px;font-size:9.8px;text-align:right;color:#d8d8d8;white-space:nowrap">-75 dBm</div><div style="left:-258px;top:413.26px;width:300px;height:20px;line-height:20px;font-size:9.8px;text-align:right;color:#d8d8d8;white-space:nowrap">-80 dBm</div><div style="left:1307.5px;top:413.26px;width:300px;height:20px;line-height:20px;font-size:9.8px;text-align:right;color:#d8d8d8;white-space:nowrap">-80 dBm</div><div style="left:-258px;top:441.6500000000001px;width:300px;height:20px;line-height:20px;font-size:9.8px;text-align:right;color:#d8d8d8;white-space:nowrap">-85 dBm</div><div style="left:1307.5px;top:441.6500000000001px;width:300px;height:20px;line-height:20px;font-size:9.8px;text-align:right;color:#d8d8d8;white-space:nowrap">-85 dBm</div><div style="left:-258px;top:470.03999999999996px;width:300px;height:20px;line-height:20px;font-size:9.8px;text-align:right;color:#d8d8d8;white-space:nowrap">-90 dBm</div><div style="left:1307.5px;top:470.03999999999996px;width:300px;height:20px;line-height:20px;font-size:9.8px;text-align:right;color:#d8d8d8;white-space:nowrap">-90 dBm</div><div style="left:-258px;top:498.43000000000006px;width:300px;height:20px;line-height:20px;font-size:9.8px;text-align:right;color:#d8d8d8;white-space:nowrap">-95 dBm</div><div style="left:1307.5px;top:498.43000000000006px;width:300px;height:20px;line-height:20px;font-size:9.8px;text-align:right;color:#d8d8d8;white-space:nowrap">-95 dBm</div></div>
<svg style="position:absolute;left:268px;top:115px;" width="1612" height="526" viewBox="0 0 1612 526"><polyline points="723.0,525.0 724.0,525.3 726.2,516.1 728.0,516.4 729.3,525.4 729.8,524.0 731.0,477.0 732.2,524.0 733.2,524.3 733.8,524.0 735.0,510.0 736.2,524.0 737.2,524.6 739.9,524.9 740.8,524.0 742.0,515.0 743.2,524.0 744.2,512.9 745.9,525.3 746.8,524.0 748.0,503.0 749.2,524.0 750.2,525.2 752.3,524.9 754.4,520.9 754.8,524.0 756.0,513.0 757.2,524.0 758.2,524.9 759.9,524.8 760.8,524.0 762.0,505.0 763.2,524.0 764.2,524.5 765.8,524.7 766.8,524.0 768.0,517.0 769.2,524.0 772.0,523.6 775.7,508.7 781.3,523.6 785.0,503.0 789.7,506.9 794.3,501.3 799.0,469.7 801.8,488.0 802.7,456.6 806.4,466.0 808.3,486.4 811.0,432.4 813.0,415.7 814.8,466.9 815.7,410.0 820.4,345.0 822.4,269.0 824.2,291.0 826.3,234.8 828.2,310.9 830.9,187.7 831.5,254.7 833.6,256.5 835.4,329.0 837.2,349.0 839.4,336.0 842.7,395.0 843.6,415.7 845.5,395.0 847.3,434.3 852.0,445.5 853.9,464.0 858.5,466.0 859.4,486.4 862.2,493.8 865.0,516.0 867.8,506.9 871.5,523.6 874.3,503.0 877.0,523.6 879.0,503.0 882.7,523.6 884.6,506.9 891.0,523.6 892.0,525.1 894.8,517.3 897.2,524.8 898.4,524.4 900.6,525.0 902.9,524.6 904.7,524.0 906.0,510.7 909.0,515.0 910.3,524.0 911.3,524.1 913.3,525.4 915.6,524.0 918.1,524.9 920.4,516.9 921.8,520.9 924.3,525.1 926.1,525.4 928.0,524.2 929.7,524.0 931.0,505.5 932.3,524.0 933.3,525.1 935.2,524.2 937.9,525.2 939.5,524.8 941.6,525.5 943.5,524.7 946.2,524.7 948.4,525.4 951.0,524.2 953.5,524.9 954.9,525.4 955.7,524.0 957.0,507.5 958.3,524.0 959.3,525.3 961.0,521.5 962.5,517.9 963.7,524.6 965.2,525.0 966.9,524.2 969.7,524.8 970.7,524.0 972.0,514.0 975.4,498.0 978.3,469.3 982.2,488.6 985.0,443.3 988.0,482.8 989.0,514.0 991.8,486.7 994.0,511.0 998.0,517.0 999.3,524.0 1000.3,518.1 1001.9,525.3 1003.2,524.7 1004.0,524.0 1005.3,506.9 1006.6,524.0 1007.6,525.5 1009.6,524.2 1010.7,524.0 1012.0,512.0 1013.3,524.0 1014.3,524.9 1015.8,524.7 1018.2,525.2 1020.7,524.2 1023.2,524.4 1024.8,525.0 1025.7,524.0 1027.0,515.0 1028.3,524.0 1029.3,518.7 1030.9,524.1 1032.8,524.0 1035.6,525.2 1037.1,525.2 1039.3,524.2 1041.3,524.3 1042.6,524.1 1045.1,524.8 1046.6,525.0 1046.7,524.0 1048.0,517.0 1049.3,524.0 1050.3,524.9 1052.1,524.4 1053.6,525.3 1056.3,525.3 1058.8,524.5 1060.5,525.3 1061.7,524.0 1063.0,496.3 1064.3,524.0 1065.3,524.5 1067.3,524.8 1069.9,525.2 1071.5,525.1 1073.7,524.9 1073.7,524.0 1075.0,515.0 1076.3,524.0 1077.3,525.0 1079.2,524.1 1081.1,524.7 1083.2,525.5 1085.1,525.5 1085.5,524.0 1086.8,461.6 1089.0,516.0 1090.3,524.0 1091.3,524.8 1093.7,525.0 1095.7,524.3 1097.1,525.1 1098.7,524.7 1100.8,524.1 1102.7,524.7 1104.7,524.8 1106.8,524.1 1109.1,524.1 1110.0,524.0 1111.3,509.8 1112.6,524.0 1113.6,524.1 1116.1,525.3 1118.1,519.1 1119.4,524.3 1122.0,524.4 1124.3,524.2 1127.0,524.1 1128.8,524.0 1131.2,524.0 1132.5,492.4 1133.8,524.0 1134.8,524.9 1136.8,525.2 1137.0,524.0 1138.3,479.0 1139.6,524.0 1140.6,525.5 1141.7,524.0 1143.0,497.3 1144.3,524.0 1145.3,525.5 1146.7,524.0 1148.0,510.0 1149.3,524.0 1150.3,524.7 1151.6,524.3 1154.4,518.8 1155.6,525.1 1157.0,524.1 1157.7,524.0 1159.0,512.0 1160.3,524.0 1161.3,525.3 1163.0,524.0 1164.3,506.0 1165.6,524.0 1166.6,524.4 1167.9,514.6 1169.8,512.1 1172.0,525.4 1173.7,524.0 1175.0,518.0 1176.3,524.0 1177.3,512.9 1179.2,524.7 1181.9,525.3 1184.0,525.3 1185.4,519.5 1187.1,524.4 1188.8,525.2 1190.5,519.0 1191.8,524.7 1193.3,524.1 1194.6,524.9 1196.6,524.9 1198.6,524.0 1200.4,524.4 1202.6,525.0 1203.9,525.4 1206.3,525.3 1207.6,524.2 1208.3,524.0 1209.6,507.9 1210.9,524.0 1211.9,525.1 1213.6,525.3 1215.5,524.1 1218.2,525.1 1218.7,524.0 1220.0,511.0 1221.3,524.0 1222.3,525.0 1223.5,524.8 1223.7,524.0 1225.0,490.5 1226.3,524.0 1227.3,524.7 1228.5,525.4 1230.3,521.3 1230.4,524.0 1231.7,501.0 1236.0,511.0 1237.3,524.0 1238.3,524.6 1240.3,524.5 1242.7,524.9 1244.4,525.3 1246.8,525.4 1249.3,524.6 1251.7,525.3 1253.7,524.2 1256.1,524.0 1257.4,508.8 1258.7,524.0 1259.7,524.6 1262.3,524.5 1263.9,520.2 1265.7,513.1 1267.8,524.6 1270.1,525.5 1272.5,524.7 1274.6,525.4 1275.7,524.0 1277.0,519.0 1278.3,524.0 1279.3,525.4 1280.9,525.2 1283.3,524.8 1285.1,524.5 1287.5,524.5 1288.9,525.1 1289.7,524.0 1291.0,510.7 1292.3,524.0 1293.3,524.6 1294.5,518.8 1296.6,524.0 1297.9,491.5 1299.2,524.0 1300.2,524.5 1301.9,524.8 1303.8,512.6 1304.7,524.0 1306.0,511.0 1307.3,524.0 1308.3,524.1 1309.5,524.3 1309.7,524.0 1311.0,506.9 1312.3,524.0 1313.3,525.1 1314.8,525.2 1317.0,524.7 1319.7,524.3 1321.7,524.4 1323.3,524.8 1324.5,516.6 1325.5,524.0 1326.8,503.0 1328.1,524.0 1329.1,525.3 1330.7,524.0 1332.0,498.2 1333.3,524.0 1334.3,524.2 1335.5,524.2 1336.9,524.4 1338.7,524.0 1340.0,520.0 1344.0,519.0 1345.3,524.0 1346.3,524.9 1348.1,524.6 1349.9,525.1 1351.2,513.2 1352.8,525.1 1354.5,525.2 1356.3,524.2 1358.8,524.1 1361.5,524.4 1362.7,524.8 1365.2,525.1 1366.4,525.3 1368.4,525.1 1370.8,525.1 1373.0,524.7 1374.8,525.3 1376.4,524.8 1377.9,524.0 1379.9,525.2 1381.2,525.4 1382.8,524.6 1385.4,524.9 1387.3,524.9 1389.0,518.7 1391.8,524.7 1394.0,525.2 1395.6,524.9 1397.5,524.2 1400.1,521.2 1402.4,524.8 1404.6,517.6 1407.3,524.2 1410.0,525.3 1411.5,524.5 1414.2,524.5 1416.6,524.7 1417.9,525.2 1420.5,525.0 1421.4,524.0 1422.7,508.8 1424.0,524.0 1425.0,524.5 1427.3,520.8 1429.4,524.9 1430.9,525.5 1431.1,524.0 1432.4,479.9 1435.0,522.0 1436.3,524.0 1437.3,524.1 1439.5,524.8 1441.1,524.1 1443.4,525.5 1445.4,524.9 1447.0,524.1 1448.6,518.1 1450.5,525.2 1453.0,524.7 1454.5,525.0 1457.0,525.2 1459.4,524.1 1461.4,525.2 1463.3,524.1 1464.7,525.2 1467.5,525.4 1467.7,524.0 1469.0,479.9 1470.3,524.0 1471.3,524.2 1473.9,524.0 1474.7,524.0 1476.0,510.0 1479.0,484.7 1482.0,517.0 1483.3,524.0 1484.3,525.2 1486.7,524.0 1488.0,522.0 1489.3,524.0 1490.3,525.5 1492.6,524.9 1494.3,525.5 1495.9,524.1 1497.3,525.2 1499.1,524.3 1499.7,524.0 1501.0,522.0 1502.3,524.0 1503.3,516.8 1504.7,524.0 1506.0,521.0 1507.3,524.0 1508.3,525.2 1510.1,525.5 1511.9,524.3 1513.2,520.9 1515.9,524.4 1518.5,525.1 1521.2,525.1 1523.6,525.1 1524.8,524.1 1527.0,525.5 1528.6,524.1 1531.3,525.1 1531.7,524.0 1533.0,480.9 1535.0,513.0 1536.3,524.0 1537.3,524.1 1538.8,524.4 1541.3,524.6 1543.0,525.0 1545.5,519.5 1547.9,525.4 1549.1,525.0 1550.7,524.0 1552.0,522.0 1553.3,524.0 1554.3,524.0 1555.9,520.5 1557.9,524.8 1559.5,524.6 1559.7,524.0 1561.0,520.0 1562.3,524.0 1563.3,524.2 1565.6,524.2 1567.2,524.9 1569.6,525.1 1571.2,524.2 1573.3,524.9 1576.1,525.2 1578.6,524.0 1580.0,524.3 1582.5,525.4 1584.2,519.6 1586.9,524.1 1588.7,524.8 1590.4,524.1 1590.7,524.0 1592.0,521.0 1594.6,507.9 1597.5,498.2 1600.0,525.0 1601.3,524.0 1602.3,524.6 1603.8,525.3 1605.4,524.6 1607.6,525.5 1609.3,525.2 1611.0,524.3" fill="none" stroke="#dcdcdc" stroke-width="1.3" stroke-linejoin="round"/></svg>
<div style="left:268px;top:641px;width:1612px;height:11px;background:linear-gradient(#6a6a6a,#3a3a3a 60%,#262626);"></div>
<div style="left:268px;top:642px;width:1612px;height:3px;background:repeating-linear-gradient(90deg,#909090 0 1px,transparent 1px 12.55px);background-position:2px 0;opacity:0.45;"></div>
<div style="left:268px;top:652px;width:1612px;height:10px;background:#000;"></div>
<div style="left:1043.5px;top:644.2px;width:60px;height:20px;line-height:20px;font-size:9.5px;text-align:center;white-space:nowrap;color:#f4f4f4;">434.000</div>
<div style="left:1169.0px;top:644.2px;width:60px;height:20px;line-height:20px;font-size:9.5px;text-align:center;white-space:nowrap;color:#f4f4f4;">434.010</div>
<div style="left:1294.5px;top:644.2px;width:60px;height:20px;line-height:20px;font-size:9.5px;text-align:center;white-space:nowrap;color:#f4f4f4;">434.020</div>
<div style="left:1420.0px;top:644.2px;width:60px;height:20px;line-height:20px;font-size:9.5px;text-align:center;white-space:nowrap;color:#f4f4f4;">434.030</div>
<div style="left:1545.5px;top:644.2px;width:60px;height:20px;line-height:20px;font-size:9.5px;text-align:center;white-space:nowrap;color:#f4f4f4;">434.040</div>
<div style="left:1671.0px;top:644.2px;width:60px;height:20px;line-height:20px;font-size:9.5px;text-align:center;white-space:nowrap;color:#f4f4f4;">434.050</div>
<div style="left:1796.5px;top:644.2px;width:60px;height:20px;line-height:20px;font-size:9.5px;text-align:center;white-space:nowrap;color:#f4f4f4;">434.060</div>
<div style="left:268px;top:662px;width:1612px;height:6px;background:#eef0f4;"></div>
<div style="left:1043px;top:664px;width:62px;height:2px;background:repeating-linear-gradient(90deg,#555 0 2px,transparent 2px 4px);"></div>
<div style="left:264px;top:0px;width:4px;height:0px;"></div>
<div style="left:327px;top:115px;width:290px;height:33px;background:#060606;"></div>
<div style="left:341px;top:120.5px;height:24px;line-height:24px;font-size:19px;white-space:nowrap;color:#f4f4f4;font-family:Liberation Mono;-webkit-text-stroke:0.3px #f4f4f4;">-38</div>
<div style="left:382px;top:125.0px;height:20px;line-height:20px;font-size:11.5px;white-space:nowrap;color:#e8e8e8;font-family:Liberation Mono;">dBm</div>
<div style="left:410.6px;top:120.3px;width:141.2px;height:7.3px;background:linear-gradient(90deg,#202020 0%,#5a5a20 30%,#c8c818 55%,#f0f000 62%,#ff9000 80%,#ff2000 92%,#ff0000 100%);"></div>
<div style="left:551.8px;top:120.1px;width:7px;height:7px;border-radius:50%;background:#f0f040"></div>
<div style="left:410.6px;top:133px;width:201px;height:1px;background:#d84040;"></div>
<div style="left:429.7px;top:131.2px;height:20px;line-height:20px;font-size:8.2px;white-space:nowrap;color:#dcdcdc;font-family:Liberation Mono;">-120</div>
<div style="left:458.7px;top:131.2px;height:20px;line-height:20px;font-size:8.2px;white-space:nowrap;color:#dcdcdc;font-family:Liberation Mono;">-100</div>
<div style="left:488.8px;top:131.2px;height:20px;line-height:20px;font-size:8.2px;white-space:nowrap;color:#dcdcdc;font-family:Liberation Mono;">-80</div>
<div style="left:517.3px;top:131.2px;height:20px;line-height:20px;font-size:8.2px;white-space:nowrap;color:#dcdcdc;font-family:Liberation Mono;">-60</div>
<div style="left:545.8px;top:131.2px;height:20px;line-height:20px;font-size:8.2px;white-space:nowrap;color:#dcdcdc;font-family:Liberation Mono;">-40</div>
<div style="left:574.9px;top:131.2px;height:20px;line-height:20px;font-size:8.2px;white-space:nowrap;color:#dcdcdc;font-family:Liberation Mono;">-20</div>
<div style="left:268px;top:668px;width:1612px;height:297px;background:#00001f;overflow:hidden;"></div>
<svg style="position:absolute;left:1075px;top:668px;" width="51" height="297" viewBox="0 0 51 297"><defs><radialGradient id="sg"><stop offset="0" stop-color="#d0dcff"/><stop offset="0.4" stop-color="#6a84ec"/><stop offset="0.75" stop-color="#2a3aa0"/><stop offset="1" stop-color="#00001f" stop-opacity="0"/></radialGradient></defs><defs><linearGradient id="hz" x1="0" x2="1"><stop offset="0" stop-color="#3048b0" stop-opacity="0"/><stop offset="0.3" stop-color="#3048b0" stop-opacity="0.25"/><stop offset="0.7" stop-color="#3048b0" stop-opacity="0.25"/><stop offset="1" stop-color="#3048b0" stop-opacity="0"/></linearGradient></defs><rect x="2" y="0" width="46" height="297" fill="url(#hz)"/><ellipse cx="25" cy="2" rx="21" ry="2.4" fill="url(#sg)" opacity="0.95"/><ellipse cx="25" cy="7.899999999999977" rx="21" ry="2.4" fill="url(#sg)" opacity="0.95"/><ellipse cx="25" cy="13.799999999999955" rx="21" ry="2.4" fill="url(#sg)" opacity="0.95"/><ellipse cx="25" cy="19.699999999999932" rx="21" ry="2.4" fill="url(#sg)" opacity="0.95"/><ellipse cx="25" cy="25.59999999999991" rx="21" ry="2.4" fill="url(#sg)" opacity="0.95"/><ellipse cx="25" cy="31.499999999999886" rx="21" ry="2.4" fill="url(#sg)" opacity="0.95"/><ellipse cx="25" cy="37.399999999999864" rx="21" ry="2.4" fill="url(#sg)" opacity="0.95"/><ellipse cx="25" cy="43.29999999999984" rx="21" ry="2.4" fill="url(#sg)" opacity="0.95"/><ellipse cx="25" cy="49.19999999999982" rx="21" ry="2.4" fill="url(#sg)" opacity="0.95"/><ellipse cx="25" cy="55.099999999999795" rx="21" ry="2.4" fill="url(#sg)" opacity="0.95"/><ellipse cx="25" cy="60.99999999999977" rx="21" ry="2.4" fill="url(#sg)" opacity="0.95"/><ellipse cx="25" cy="66.89999999999975" rx="21" ry="2.4" fill="url(#sg)" opacity="0.95"/><ellipse cx="25" cy="72.79999999999973" rx="21" ry="2.4" fill="url(#sg)" opacity="0.95"/><ellipse cx="25" cy="78.6999999999997" rx="21" ry="2.4" fill="url(#sg)" opacity="0.95"/><ellipse cx="25" cy="84.59999999999968" rx="21" ry="2.4" fill="url(#sg)" opacity="0.95"/><ellipse cx="25" cy="90.49999999999966" rx="21" ry="2.4" fill="url(#sg)" opacity="0.95"/><ellipse cx="25" cy="96.39999999999964" rx="21" ry="2.4" fill="url(#sg)" opacity="0.95"/><ellipse cx="25" cy="102.29999999999961" rx="21" ry="2.4" fill="url(#sg)" opacity="0.95"/><ellipse cx="25" cy="108.19999999999959" rx="21" ry="2.4" fill="url(#sg)" opacity="0.95"/><ellipse cx="25" cy="114.09999999999957" rx="21" ry="2.4" fill="url(#sg)" opacity="0.85"/><ellipse cx="25" cy="119.99999999999955" rx="21" ry="2.4" fill="url(#sg)" opacity="0.85"/><ellipse cx="25" cy="125.89999999999952" rx="21" ry="2.4" fill="url(#sg)" opacity="0.85"/><ellipse cx="25" cy="131.7999999999995" rx="21" ry="2.4" fill="url(#sg)" opacity="0.85"/><ellipse cx="25" cy="137.69999999999948" rx="21" ry="2.4" fill="url(#sg)" opacity="0.85"/><ellipse cx="25" cy="143.59999999999945" rx="21" ry="2.4" fill="url(#sg)" opacity="0.85"/><ellipse cx="25" cy="149.49999999999943" rx="21" ry="2.4" fill="url(#sg)" opacity="0.85"/><ellipse cx="25" cy="155.3999999999994" rx="21" ry="2.4" fill="url(#sg)" opacity="0.85"/><ellipse cx="25" cy="161.2999999999994" rx="21" ry="2.4" fill="url(#sg)" opacity="0.85"/><ellipse cx="25" cy="167.19999999999936" rx="21" ry="2.4" fill="url(#sg)" opacity="0.85"/><ellipse cx="25" cy="173.09999999999934" rx="21" ry="2.4" fill="url(#sg)" opacity="0.85"/><ellipse cx="25" cy="178.99999999999932" rx="21" ry="2.4" fill="url(#sg)" opacity="0.85"/><ellipse cx="25" cy="184.8999999999993" rx="21" ry="2.4" fill="url(#sg)" opacity="0.85"/><ellipse cx="25" cy="190.79999999999927" rx="21" ry="2.4" fill="url(#sg)" opacity="0.85"/><ellipse cx="25" cy="196.69999999999925" rx="21" ry="2.4" fill="url(#sg)" opacity="0.85"/><ellipse cx="25" cy="202.59999999999923" rx="21" ry="2.4" fill="url(#sg)" opacity="0.85"/><ellipse cx="25" cy="208.4999999999992" rx="21" ry="2.4" fill="url(#sg)" opacity="0.85"/><ellipse cx="25" cy="214.39999999999918" rx="21" ry="2.4" fill="url(#sg)" opacity="0.85"/><ellipse cx="25" cy="220.29999999999916" rx="21" ry="2.4" fill="url(#sg)" opacity="0.85"/><ellipse cx="25" cy="226.19999999999914" rx="21" ry="2.4" fill="url(#sg)" opacity="0.85"/><ellipse cx="25" cy="232.0999999999991" rx="21" ry="2.4" fill="url(#sg)" opacity="0.85"/><ellipse cx="25" cy="237.9999999999991" rx="21" ry="2.4" fill="url(#sg)" opacity="0.85"/><ellipse cx="25" cy="243.89999999999907" rx="21" ry="2.4" fill="url(#sg)" opacity="0.85"/><ellipse cx="25" cy="249.79999999999905" rx="21" ry="2.4" fill="url(#sg)" opacity="0.85"/><ellipse cx="25" cy="255.69999999999902" rx="21" ry="2.4" fill="url(#sg)" opacity="0.85"/><ellipse cx="25" cy="261.599999999999" rx="21" ry="2.4" fill="url(#sg)" opacity="0.85"/><ellipse cx="25" cy="267.499999999999" rx="21" ry="2.4" fill="url(#sg)" opacity="0.85"/><ellipse cx="25" cy="273.39999999999895" rx="21" ry="2.4" fill="url(#sg)" opacity="0.85"/><ellipse cx="25" cy="279.29999999999893" rx="21" ry="2.4" fill="url(#sg)" opacity="0.85"/><ellipse cx="25" cy="285.1999999999989" rx="21" ry="2.4" fill="url(#sg)" opacity="0.85"/><ellipse cx="25" cy="291.0999999999989" rx="21" ry="2.4" fill="url(#sg)" opacity="0.85"/><ellipse cx="25" cy="296.99999999999886" rx="21" ry="2.4" fill="url(#sg)" opacity="0.85"/><rect x="22.5" y="112" width="18.5" height="185" fill="#b8c8ff" opacity="0.42"/><rect x="24" y="0" width="1.3" height="75" fill="#ffffff"/><rect x="29" y="75" width="1.3" height="37" fill="#ffffff"/><rect x="24.5" y="74" width="5" height="1.3" fill="#ffffff"/><rect x="24.5" y="112" width="1.5" height="185" fill="#e8f0ff" opacity="0.8"/></svg>
<div style="left:1075px;top:668px;width:1px;height:297px;background:repeating-linear-gradient(#d0d0d0 0 3px,transparent 3px 6px);"></div>
<div style="left:1125px;top:668px;width:1px;height:297px;background:repeating-linear-gradient(#d0d0d0 0 3px,transparent 3px 6px);"></div>
<div style="left:1254px;top:668px;width:1px;height:297px;background:#05052c;"></div>
<div style="left:996px;top:896px;width:156px;height:57px;background:rgba(8,8,14,0.85);"></div>
<div style="left:1003.5px;top:904.2px;height:20px;line-height:20px;font-size:13.7px;white-space:nowrap;color:#f0f0f0;font-family:Liberation Mono;">Freq:&nbsp;&nbsp;&nbsp;&nbsp;&nbsp;434 MHz</div>
<div style="left:1003.5px;top:927.1px;height:20px;line-height:20px;font-size:13.7px;white-space:nowrap;color:#f0f0f0;font-family:Liberation Mono;">Span: ±64.305 kHz</div>
<div style="left:268px;top:965px;width:1612px;height:27px;background:#000;"></div>
<div style="left:295px;top:965px;width:1467px;height:10px;background:linear-gradient(#4a4a4a,#1e1e1e);"></div>
<div style="left:295px;top:965px;width:1467px;height:4px;background:repeating-linear-gradient(90deg,#8a8a8a 0 1px,transparent 1px 11.4px);opacity:0.7;"></div>
<div style="left:882px;top:965px;width:294px;height:27px;background:linear-gradient(#555 0%,#3a3a3a 45%,#4a4a20 80%,#8a8a20 100%);border-left:1px solid #777;border-right:1px solid #777;"></div>
<div style="left:1028px;top:965px;width:2px;height:27px;background:#e8e820;"></div>
<div style="left:308.0px;top:972.7px;width:70px;height:20px;line-height:20px;font-size:12.3px;text-align:center;white-space:nowrap;color:#bdbdbd;">433.700</div>
<div style="left:422.0px;top:972.7px;width:70px;height:20px;line-height:20px;font-size:12.3px;text-align:center;white-space:nowrap;color:#bdbdbd;">433.750</div>
<div style="left:536.0px;top:972.7px;width:70px;height:20px;line-height:20px;font-size:12.3px;text-align:center;white-space:nowrap;color:#bdbdbd;">433.800</div>
<div style="left:650.0px;top:972.7px;width:70px;height:20px;line-height:20px;font-size:12.3px;text-align:center;white-space:nowrap;color:#bdbdbd;">433.850</div>
<div style="left:764.0px;top:972.7px;width:70px;height:20px;line-height:20px;font-size:12.3px;text-align:center;white-space:nowrap;color:#bdbdbd;">433.900</div>
<div style="left:878.0px;top:972.7px;width:70px;height:20px;line-height:20px;font-size:12.3px;text-align:center;white-space:nowrap;color:#bdbdbd;">433.950</div>
<div style="left:992.0px;top:972.7px;width:70px;height:20px;line-height:20px;font-size:12.3px;text-align:center;white-space:nowrap;color:#bdbdbd;">434.000</div>
<div style="left:1106.0px;top:972.7px;width:70px;height:20px;line-height:20px;font-size:12.3px;text-align:center;white-space:nowrap;color:#bdbdbd;">434.050</div>
<div style="left:1220.0px;top:972.7px;width:70px;height:20px;line-height:20px;font-size:12.3px;text-align:center;white-space:nowrap;color:#bdbdbd;">434.100</div>
<div style="left:1334.0px;top:972.7px;width:70px;height:20px;line-height:20px;font-size:12.3px;text-align:center;white-space:nowrap;color:#bdbdbd;">434.150</div>
<div style="left:1448.0px;top:972.7px;width:70px;height:20px;line-height:20px;font-size:12.3px;text-align:center;white-space:nowrap;color:#bdbdbd;">434.200</div>
<div style="left:1562.0px;top:972.7px;width:70px;height:20px;line-height:20px;font-size:12.3px;text-align:center;white-space:nowrap;color:#bdbdbd;">434.250</div>
<div style="left:1676.0px;top:972.7px;width:70px;height:20px;line-height:20px;font-size:12.3px;text-align:center;white-space:nowrap;color:#bdbdbd;">434.300</div>
<div style="left:268px;top:965px;width:27px;height:27px;background:#f0f0f0;"></div>
<div style="left:270px;top:973px;width:24px;height:17px;background:#e4e4e4;border:1px solid #b8b8b8;"></div>
<svg style="position:absolute;left:274px;top:974px;" width="16" height="16" viewBox="0 0 16 16"><circle cx="8" cy="8" r="6.5" fill="none" stroke="#333" stroke-width="1.5"/><path d="M8 5 L5 8 L8 11 Z M11 5 L8 8 L11 11 Z" fill="#222"/></svg>
<div style="left:1762px;top:965px;width:118px;height:27px;background:#f0f0f0;"></div>
<div style="left:1763.5px;top:967.5px;width:36px;height:23px;background:#e4e4e4;border:1px solid #b8b8b8;"></div>
<svg style="position:absolute;left:1772px;top:971px;" width="18" height="14" viewBox="0 0 18 14"><rect x="1" y="5" width="15" height="8" fill="#f8f8f8" stroke="#333" stroke-width="1"/><path d="M3 7.5 H14 M3 10 H14" stroke="#444" stroke-width="1" stroke-dasharray="1.2 0.8"/><path d="M8 5 Q9 2 12 1" fill="none" stroke="#333" stroke-width="0.9"/></svg>
<div style="left:1802.5px;top:967.5px;width:49px;height:23px;background:#e4e4e4;border:1px solid #b8b8b8;"></div>
<div style="left:1811px;top:969.0px;height:20px;line-height:20px;font-size:11.5px;white-space:nowrap;color:#111;">x5</div>
<svg style="position:absolute;left:1839px;top:975px;" width="6" height="9" viewBox="0 0 6 9"><path d="M0 0 L6 4.5 L0 9 Z" fill="#111"/></svg>
<div style="left:1854px;top:967.5px;width:24px;height:23px;background:#e4e4e4;border:1px solid #b8b8b8;"></div>
<svg style="position:absolute;left:1858px;top:971px;" width="16" height="16" viewBox="0 0 16 16"><circle cx="8" cy="8" r="6.5" fill="none" stroke="#333" stroke-width="1.5"/><path d="M5 5 L8 8 L5 11 Z M8 5 L11 8 L8 11 Z" fill="#222"/></svg>
<div style="left:268px;top:992px;width:1652px;height:3px;background:#f0f0f0;"></div>
<div style="left:1880px;top:115px;width:38px;height:877px;background:#000;"></div>
<div style="left:1880px;top:115px;width:1px;height:850px;background:#9a9a9a;"></div>
<div style="left:1881px;top:117px;width:37px;height:28px;background:linear-gradient(#3a3a3a,#0a0a0a 60%,#000);border-bottom:1px solid #555;"></div>
<div style="left:1881.0px;top:120.0px;width:37px;height:20px;line-height:20px;font-size:11.5px;text-align:center;white-space:nowrap;color:#eaeaea;">Auto</div>
<div style="left:1883px;top:239.5px;width:35px;height:360px;background:linear-gradient(#ffff00 0px,#ffff60 12px,#ffffff 34px,#ffffff 120px,#d0dcff 160px,#7090f0 215px,#3b5ad0 260px,#1c2a80 300px,#0a0f48 330px,#000028 358px);"></div>
<div style="left:1883px;top:599px;width:35px;height:2px;background:#ffffff;"></div>
<div style="left:1882.0px;top:187.0px;width:36px;height:20px;line-height:20px;font-size:9.5px;text-align:center;white-space:nowrap;color:#a8a8a8;">-10</div>
<div style="left:1886px;top:241px;width:28px;height:18px;background:rgba(90,90,30,0.75);border-radius:4px;"></div>
<div style="left:1886.0px;top:240.0px;width:28px;height:20px;line-height:20px;font-size:9.5px;text-align:center;white-space:nowrap;color:#d8d8d8;">-20</div>
<div style="left:1886px;top:294px;width:28px;height:18px;background:rgba(110,110,110,0.9);border-radius:4px;"></div>
<div style="left:1886.0px;top:293.0px;width:28px;height:20px;line-height:20px;font-size:9.5px;text-align:center;white-space:nowrap;color:#d8d8d8;">-30</div>
<div style="left:1886px;top:347px;width:28px;height:18px;background:rgba(100,100,100,0.85);border-radius:4px;"></div>
<div style="left:1886.0px;top:346.0px;width:28px;height:20px;line-height:20px;font-size:9.5px;text-align:center;white-space:nowrap;color:#d8d8d8;">-40</div>
<div style="left:1886px;top:400px;width:28px;height:18px;background:rgba(90,95,110,0.85);border-radius:4px;"></div>
<div style="left:1886.0px;top:399.0px;width:28px;height:20px;line-height:20px;font-size:9.5px;text-align:center;white-space:nowrap;color:#d8d8d8;">-50</div>
<div style="left:1886px;top:453px;width:28px;height:18px;background:rgba(40,55,110,0.85);border-radius:4px;"></div>
<div style="left:1886.0px;top:452.0px;width:28px;height:20px;line-height:20px;font-size:9.5px;text-align:center;white-space:nowrap;color:#d8d8d8;">-60</div>
<div style="left:1886px;top:506px;width:28px;height:18px;background:rgba(20,30,80,0.85);border-radius:4px;"></div>
<div style="left:1886.0px;top:505.0px;width:28px;height:20px;line-height:20px;font-size:9.5px;text-align:center;white-space:nowrap;color:#d8d8d8;">-70</div>
<div style="left:1886px;top:559px;width:28px;height:18px;background:rgba(10,15,50,0.9);border-radius:4px;"></div>
<div style="left:1886.0px;top:558.0px;width:28px;height:20px;line-height:20px;font-size:9.5px;text-align:center;white-space:nowrap;color:#d8d8d8;">-80</div>
<div style="left:1882.0px;top:611.0px;width:36px;height:20px;line-height:20px;font-size:9.5px;text-align:center;white-space:nowrap;color:#a8a8a8;">-90</div>
<div style="left:1882.0px;top:664.0px;width:36px;height:20px;line-height:20px;font-size:9.5px;text-align:center;white-space:nowrap;color:#a8a8a8;">-100</div>
<div style="left:1882.0px;top:717.0px;width:36px;height:20px;line-height:20px;font-size:9.5px;text-align:center;white-space:nowrap;color:#a8a8a8;">-110</div>
<div style="left:1882.0px;top:770.0px;width:36px;height:20px;line-height:20px;font-size:9.5px;text-align:center;white-space:nowrap;color:#a8a8a8;">-120</div>
<div style="left:1882.0px;top:823.0px;width:36px;height:20px;line-height:20px;font-size:9.5px;text-align:center;white-space:nowrap;color:#a8a8a8;">-130</div>
<div style="left:1882.0px;top:876.0px;width:36px;height:20px;line-height:20px;font-size:9.5px;text-align:center;white-space:nowrap;color:#a8a8a8;">-140</div>
<div style="left:1882.0px;top:929.0px;width:36px;height:20px;line-height:20px;font-size:9.5px;text-align:center;white-space:nowrap;color:#a8a8a8;">-150</div>
<div style="left:192px;top:375px;width:806px;height:608px;background:rgba(0,0,0,0.10);filter:blur(4px);"></div>
<div style="left:198px;top:373px;width:794px;height:600px;background:#f0f0f0;border:1px solid #3b82c4;"></div>
<div style="left:199px;top:374px;width:792px;height:50px;background:#fff;"></div>
<svg style="position:absolute;left:207px;top:380px;" width="17" height="16" viewBox="0 0 17 16"><rect x="0.5" y="0.5" width="16" height="15" fill="#1c2fc8"/><rect x="2" y="2" width="13" height="8" fill="#48b8c8"/><path d="M2 10 L6 5 L10 8 L15 4 V10 Z" fill="#38a848"/><circle cx="4" cy="3.5" r="1.5" fill="#e84848"/><rect x="12" y="2" width="3" height="5" fill="#f0f0f0"/><text x="1" y="15" font-size="6" font-family="Liberation Sans" font-weight="bold" fill="#fff">SSTV</text></svg>
<div style="left:228px;top:378.2px;height:20px;line-height:20px;font-size:11.1px;white-space:nowrap;color:#111;">F5OEO (F5OEO.MDT) - MMSSTV Ver 1.08</div>
<div style="left:871px;top:388px;width:11px;height:1px;background:#111;"></div>
<div style="left:917px;top:383px;width:10px;height:10px;border:1px solid #111;"></div>
<svg style="position:absolute;left:962px;top:382px;" width="12" height="12" viewBox="0 0 12 12"><path d="M1 1 L11 11 M11 1 L1 11" stroke="#111" stroke-width="1.1"/></svg>
<div style="left:206.2px;top:403.7px;height:20px;line-height:20px;font-size:11.6px;white-space:nowrap;color:#111;">File</div>
<div style="left:238px;top:403.7px;height:20px;line-height:20px;font-size:11.6px;white-space:nowrap;color:#111;">Edit</div>
<div style="left:271.8px;top:403.7px;height:20px;line-height:20px;font-size:11.6px;white-space:nowrap;color:#111;">View</div>
<div style="left:311px;top:403.7px;height:20px;line-height:20px;font-size:11.6px;white-space:nowrap;color:#111;">Option</div>
<div style="left:362px;top:403.7px;height:20px;line-height:20px;font-size:11.6px;white-space:nowrap;color:#111;">PRofiles</div>
<div style="left:417.6px;top:403.7px;height:20px;line-height:20px;font-size:11.6px;white-space:nowrap;color:#111;">Program</div>
<div style="left:477.8px;top:403.7px;height:20px;line-height:20px;font-size:11.6px;white-space:nowrap;color:#111;">Help</div>
<div style="left:199px;top:423px;width:792px;height:1px;background:#f0f0f0;"></div>
<div style="left:200px;top:447px;width:339px;height:1px;background:#fff;"></div>
<div style="left:201px;top:427px;width:48px;height:21px;background:#f0f0f0;border-top:1px solid #fff;"></div>
<div style="left:207px;top:427.4px;height:20px;line-height:20px;font-size:14.3px;white-space:nowrap;font-family:Liberation Serif;color:#111;">Sync</div>
<div style="left:299px;top:427px;width:52px;height:21px;background:#f0f0f0;border-top:1px solid #fff;border-right:1px solid #696969;box-shadow:inset -1px 0 0 #a0a0a0;"></div>
<div style="left:302.8px;top:427.4px;height:20px;line-height:20px;font-size:14.3px;white-space:nowrap;font-family:Liberation Serif;color:#111;">History</div>
<div style="left:351px;top:427px;width:48.39999999999998px;height:21px;background:#f0f0f0;border-top:1px solid #fff;border-right:1px solid #696969;box-shadow:inset -1px 0 0 #a0a0a0;"></div>
<div style="left:358.4px;top:427.4px;height:20px;line-height:20px;font-size:14.3px;white-space:nowrap;font-family:Liberation Serif;color:#111;">TX</div>
<div style="left:399.4px;top:427px;width:67.60000000000002px;height:21px;background:#f0f0f0;border-top:1px solid #fff;border-right:1px solid #696969;box-shadow:inset -1px 0 0 #a0a0a0;"></div>
<div style="left:405.8px;top:427.4px;height:20px;line-height:20px;font-size:14.3px;white-space:nowrap;font-family:Liberation Serif;color:#111;">Template</div>
<div style="left:249px;top:425px;width:50px;height:23px;background:#f0f0f0;border-top:1px solid #fff;border-left:1px solid #fff;border-right:1px solid #696969;box-shadow:inset -1px 0 0 #a0a0a0;"></div>
<div style="left:251px;top:427.5px;width:45.5px;height:19.5px;border:1px dotted #222;"></div>
<div style="left:254px;top:425.8px;height:20px;line-height:20px;font-size:14.3px;white-space:nowrap;font-family:Liberation Serif;color:#111;">RX</div>
<div style="left:200px;top:448px;width:339px;height:304px;border-left:1px solid #fff;border-right:1px solid #696969;border-bottom:1px solid #696969;box-shadow:inset -1px -1px 0 #a0a0a0;"></div>
<div style="left:203.5px;top:452.5px;width:331px;height:263px;background:#fff;border-top:1px solid #a0a0a0;border-left:1px solid #a0a0a0;border-right:1px solid #fff;border-bottom:1px solid #fff;box-shadow:inset 1px 1px 0 #696969, inset -1px -1px 0 #e3e3e3;"></div>
<svg style="position:absolute;left:208px;top:456px;" width="320" height="200" viewBox="0 0 320 200"><defs><linearGradient id="tg" x1="0" x2="0" y1="0" y2="1"><stop offset="0" stop-color="#707070"/><stop offset="0.45" stop-color="#d8d8d8"/><stop offset="1" stop-color="#7c7c7c"/></linearGradient></defs><rect x="0" y="0" width="320" height="200" fill="#8c8c8c"/><rect x="0" y="0" width="320" height="22" fill="url(#tg)"/><rect x="8.5" y="0" width="2.4" height="200" fill="#f2f2f2"/><rect x="28.4" y="0" width="2.4" height="200" fill="#f2f2f2"/><rect x="48.4" y="0" width="2.4" height="200" fill="#f2f2f2"/><rect x="68.3" y="0" width="2.4" height="200" fill="#f2f2f2"/><rect x="88.3" y="0" width="2.4" height="200" fill="#f2f2f2"/><rect x="108.2" y="0" width="2.4" height="200" fill="#f2f2f2"/><rect x="128.2" y="0" width="2.4" height="200" fill="#f2f2f2"/><rect x="148.2" y="0" width="2.4" height="200" fill="#f2f2f2"/><rect x="168.1" y="0" width="2.4" height="200" fill="#f2f2f2"/><rect x="188.0" y="0" width="2.4" height="200" fill="#f2f2f2"/><rect x="208.0" y="0" width="2.4" height="200" fill="#f2f2f2"/><rect x="227.9" y="0" width="2.4" height="200" fill="#f2f2f2"/><rect x="247.9" y="0" width="2.4" height="200" fill="#f2f2f2"/><rect x="267.8" y="0" width="2.4" height="200" fill="#f2f2f2"/><rect x="287.8" y="0" width="2.4" height="200" fill="#f2f2f2"/><rect x="307.8" y="0" width="2.4" height="200" fill="#f2f2f2"/><rect x="0" y="24.1" width="320" height="2.4" fill="#f2f2f2"/><rect x="0" y="52.4" width="320" height="2.4" fill="#f2f2f2"/><rect x="0" y="80.6" width="320" height="2.4" fill="#f2f2f2"/><rect x="0" y="108.8" width="320" height="2.4" fill="#f2f2f2"/><rect x="0" y="137.2" width="320" height="2.4" fill="#f2f2f2"/><rect x="0" y="165.4" width="320" height="2.4" fill="#f2f2f2"/><rect x="0" y="194.8" width="320" height="2.4" fill="#f2f2f2"/><rect x="0" y="0" width="8" height="43" fill="#30b070"/><rect x="0" y="43" width="8" height="45" fill="#c03080"/><rect x="0" y="88" width="8" height="47" fill="#000"/><rect x="0" y="135" width="8" height="43" fill="#7030c0"/><rect x="0" y="178" width="8" height="22" fill="#60c040"/><rect x="308" y="0" width="12" height="30" fill="#f0f000"/><rect x="308" y="30" width="12" height="32" fill="#00e0f0"/><rect x="308" y="62" width="12" height="32" fill="#00e000"/><rect x="308" y="94" width="12" height="34" fill="#e000e0"/><rect x="308" y="128" width="12" height="32" fill="#f00000"/><rect x="308" y="160" width="12" height="32" fill="#0000f0"/><rect x="308" y="192" width="12" height="8" fill="#000"/><path d="M11 16 L23 0.5 L40.7 25 L28 41 Z" fill="#000" stroke="#f0f0f0" stroke-width="1.5"/><path d="M278 25 L293 0.5 L307 16 L289 41 Z" fill="#000" stroke="#f0f0f0" stroke-width="1.5"/><path d="M10 200 L23.7 181 L37 200 Z" fill="#000" stroke="#f0f0f0" stroke-width="1.5"/><path d="M271 200 L285 181 L300 200 Z" fill="#000" stroke="#f0f0f0" stroke-width="1.5"/><path d="M-1.5 110 L8 103 L17.5 110 L8 117 Z" fill="#f4f4f4"/><path d="M17.5 110 L27 103 L36.5 110 L27 117 Z" fill="#f4f4f4"/><path d="M33.5 110 L43 103 L52.5 110 L43 117 Z" fill="#f4f4f4"/><path d="M263.5 110 L273 103 L282.5 110 L273 117 Z" fill="#f4f4f4"/><path d="M278.5 110 L288 103 L297.5 110 L288 117 Z" fill="#f4f4f4"/><path d="M296.5 110 L306 103 L315.5 110 L306 117 Z" fill="#f4f4f4"/><rect x="124" y="13" width="70" height="26" fill="#f2f2f2"/><rect x="137" y="20" width="45" height="12" fill="#000"/><rect x="157" y="21" width="6" height="10" fill="#20e020"/><rect x="68" y="53.6" width="19" height="19" fill="#f4f4f4"/><rect x="68" y="72.4" width="19" height="19" fill="#c8c8c8"/><rect x="68" y="91.2" width="19" height="19" fill="#a4a4a4"/><rect x="68" y="110.0" width="19" height="19" fill="#707070"/><rect x="68" y="128.8" width="19" height="19" fill="#404040"/><rect x="68" y="147.6" width="19" height="19" fill="#080808"/><rect x="228" y="53.6" width="19.6" height="113" fill="#000"/><ellipse cx="157" cy="110.5" rx="48.5" ry="70" fill="#f0f0f0"/><clipPath id="ov"><ellipse cx="157" cy="110.5" rx="46.5" ry="68"/></clipPath><g clip-path="url(#ov)"><rect x="100" y="40" width="120" height="150" fill="#b4d2ea"/><path d="M100 100 Q110 60 130 55 L112 150 L100 160 Z" fill="#9cc0dc"/><path d="M150 84 L178 78 L180 145 L150 150 Z" fill="#262626"/><path d="M200 70 L215 80 L215 160 L200 150 Z" fill="#2a2a2a"/><path d="M130 62 Q142 52 155 62 L160 110 L150 140 L128 135 L126 95 Z" fill="#b89068"/><ellipse cx="146" cy="86" rx="9" ry="17" fill="#dcb4a0"/><path d="M131 62 Q142 54 154 62 L152 67 Q142 60 133 68 Z" fill="#c84860"/><path d="M114 110 Q125 100 140 108 L146 130 L142 165 L120 168 Z" fill="#b02828"/><path d="M124 140 L160 124 L168 128 L128 150 Z" fill="#d8a890"/><path d="M176 74 Q188 68 194 78 L196 108 L178 110 Z" fill="#e8b8b8"/><path d="M180 96 Q188 100 194 92" fill="none" stroke="#c01818" stroke-width="2.2"/><path d="M184 62 L196 58 L194 76 Z" fill="#88b8c8"/><path d="M170 110 Q185 104 200 112 L200 150 L168 152 Z" fill="#3a9050"/><path d="M148 148 L194 146 L195 178 L150 182 Z" fill="#e2c444"/><path d="M120 160 L150 150 L150 190 L110 190 Z" fill="#503028"/><path d="M152 114 H174 M162 102 V134 M152 126 H174" stroke="#e8e8e8" stroke-width="0.9"/></g></svg>
<div style="left:203.5px;top:722.8px;width:58.7px;height:23.7px;background:#f0f0f0;border-top:1px solid #fff;border-left:1px solid #fff;border-right:1px solid #696969;border-bottom:1px solid #696969;box-shadow:inset -1px -1px 0 #a0a0a0, inset 1px 1px 0 #e3e3e3;"></div>
<div style="left:203.8px;top:724.6px;width:58px;height:20px;line-height:20px;font-size:14.3px;text-align:center;white-space:nowrap;font-family:Liberation Serif;color:#a0a0a0;">Clear</div>
<div style="left:263px;top:722.8px;width:60px;height:23.7px;background:#f0f0f0;border-top:1px solid #fff;border-left:1px solid #fff;border-right:1px solid #696969;border-bottom:1px solid #696969;box-shadow:inset -1px -1px 0 #a0a0a0, inset 1px 1px 0 #e3e3e3;"></div>
<div style="left:263.0px;top:724.6px;width:60px;height:20px;line-height:20px;font-size:14.3px;text-align:center;white-space:nowrap;font-family:Liberation Serif;color:#111;">ReSync</div>
<div style="left:337px;top:729px;width:12.5px;height:12px;background:#fff;border:1px solid #555;box-shadow:inset 1px 1px 0 #888;"></div>
<svg style="position:absolute;left:338px;top:730px;" width="11" height="10" viewBox="0 0 11 10"><path d="M2 5 L4.5 8 L9 1.5" fill="none" stroke="#111" stroke-width="1.8"/></svg>
<div style="left:355px;top:725.5px;height:20px;line-height:20px;font-size:14.3px;white-space:nowrap;font-family:Liberation Serif;color:#111;">Auto history</div>
<div style="left:446.3px;top:722.8px;width:35px;height:23.7px;background:#f0f0f0;border-top:1px solid #fff;border-left:1px solid #fff;border-right:1px solid #696969;border-bottom:1px solid #696969;box-shadow:inset -1px -1px 0 #a0a0a0, inset 1px 1px 0 #e3e3e3;"></div>
<svg style="position:absolute;left:450px;top:727px;" width="28" height="16" viewBox="0 0 28 16"><path d="M3 2 V9 H9 M7 7 L9 9 L7 11" fill="none" stroke="#b8b8b8" stroke-width="1.2"/><rect x="13" y="3" width="8" height="8" fill="none" stroke="#b8b8b8"/><rect x="16" y="6" width="8" height="8" fill="#f0f0f0" stroke="#b8b8b8"/></svg>
<div style="left:483.3px;top:722.8px;width:24px;height:23.7px;background:#f0f0f0;border-top:1px solid #fff;border-left:1px solid #fff;border-right:1px solid #696969;border-bottom:1px solid #696969;box-shadow:inset -1px -1px 0 #a0a0a0, inset 1px 1px 0 #e3e3e3;"></div>
<svg style="position:absolute;left:485px;top:727px;" width="20" height="16" viewBox="0 0 20 16"><rect x="2" y="5" width="5.5" height="7" fill="#e82020" stroke="#111" stroke-width="0.6"/><rect x="7.5" y="5" width="5.5" height="7" fill="#20c020" stroke="#111" stroke-width="0.6"/><rect x="13" y="5" width="5.5" height="7" fill="#2040e0" stroke="#111" stroke-width="0.6"/><path d="M2 14 L17 2 M14 2 H17 V5" fill="none" stroke="#111" stroke-width="0.8"/></svg>
<div style="left:509.3px;top:722.8px;width:24px;height:23.7px;background:#f0f0f0;border-top:1px solid #fff;border-left:1px solid #fff;border-right:1px solid #696969;border-bottom:1px solid #696969;box-shadow:inset -1px -1px 0 #a0a0a0, inset 1px 1px 0 #e3e3e3;"></div>
<svg style="position:absolute;left:512px;top:726px;" width="18" height="18" viewBox="0 0 18 18"><circle cx="7" cy="7" r="5" fill="#fff" stroke="#111" stroke-width="1.5"/><path d="M10.5 10.5 L15.5 15.5" stroke="#1a3a9a" stroke-width="2.5"/></svg>
<div style="left:250.5px;top:757px;width:88.80000000000001px;height:23px;border-right:1px solid #696969;box-shadow:inset -1px 0 0 #a0a0a0;border-top:1px solid #fff;"></div>
<div style="left:255.4px;top:756.5px;height:20px;line-height:20px;font-size:14.3px;white-space:nowrap;font-family:Liberation Serif;color:#111;">S.templates 1</div>
<div style="left:339.3px;top:757px;width:48.30000000000001px;height:23px;border-right:1px solid #696969;box-shadow:inset -1px 0 0 #a0a0a0;border-top:1px solid #fff;"></div>
<div style="left:345px;top:756.5px;height:20px;line-height:20px;font-size:14.3px;white-space:nowrap;font-family:Liberation Serif;color:#111;">2</div>
<div style="left:387.6px;top:757px;width:48.299999999999955px;height:23px;border-right:1px solid #696969;box-shadow:inset -1px 0 0 #a0a0a0;border-top:1px solid #fff;"></div>
<div style="left:394px;top:756.5px;height:20px;line-height:20px;font-size:14.3px;white-space:nowrap;font-family:Liberation Serif;color:#111;">3</div>
<div style="left:435.9px;top:757px;width:47.400000000000034px;height:23px;border-right:1px solid #696969;box-shadow:inset -1px 0 0 #a0a0a0;border-top:1px solid #fff;"></div>
<div style="left:442px;top:756.5px;height:20px;line-height:20px;font-size:14.3px;white-space:nowrap;font-family:Liberation Serif;color:#111;">4</div>
<div style="left:200px;top:753.8px;width:50.5px;height:27px;background:#f0f0f0;border-top:1px solid #fff;border-left:1px solid #fff;border-right:1px solid #696969;"></div>
<div style="left:206.5px;top:754.7px;height:20px;line-height:20px;font-size:14.3px;white-space:nowrap;font-family:Liberation Serif;color:#111;">S.pix</div>
<div style="left:200px;top:780px;width:790px;height:190px;border-top:1px solid #fff;"></div>
<div style="left:203.9px;top:783px;width:783px;height:182.5px;background:#fff;border-top:1px solid #a0a0a0;border-left:1px solid #a0a0a0;border-right:1px solid #fff;border-bottom:1px solid #fff;box-shadow:inset 1px 1px 0 #696969, inset -1px -1px 0 #e3e3e3;"></div>
<div style="left:208.1px;top:787.3px;width:125px;height:86px;border:1.5px solid #000;background:#fff;"></div>
<div style="left:337.6px;top:787.3px;width:125px;height:86px;border:1.5px solid #000;background:#fff;"></div>
<div style="left:467.1px;top:787.3px;width:125px;height:86px;border:1.5px solid #000;background:#fff;"></div>
<div style="left:596.6px;top:787.3px;width:125px;height:86px;border:1.5px solid #000;background:#fff;"></div>
<div style="left:726.1px;top:787.3px;width:125px;height:86px;border:1.5px solid #000;background:#fff;"></div>
<div style="left:855.6px;top:787.3px;width:125px;height:86px;border:1.5px solid #000;background:#fff;"></div>
<div style="left:208.1px;top:877.2px;width:125px;height:86px;border:1.5px solid #000;background:#fff;"></div>
<div style="left:337.6px;top:877.2px;width:125px;height:86px;border:1.5px solid #000;background:#fff;"></div>
<div style="left:467.1px;top:877.2px;width:125px;height:86px;border:1.5px solid #000;background:#fff;"></div>
<div style="left:596.6px;top:877.2px;width:125px;height:86px;border:1.5px solid #000;background:#fff;"></div>
<div style="left:726.1px;top:877.2px;width:125px;height:86px;border:1.5px solid #000;background:#fff;"></div>
<div style="left:855.6px;top:877.2px;width:125px;height:86px;border:1.5px solid #000;background:#fff;"></div>
<div style="left:540.5px;top:447.6px;width:81px;height:255px;border:1px solid #a0a0a0;box-shadow:1px 1px 0 #fff, inset 1px 1px 0 #fff;"></div>
<div style="left:546px;top:440px;width:62px;height:17px;background:#f0f0f0;"></div>
<div style="left:547.6px;top:438.3px;height:20px;line-height:20px;font-size:14.3px;white-space:nowrap;font-family:Liberation Serif;color:#111;">RX Mode</div>
<div style="left:543px;top:457.5px;width:76px;height:22.80000000000001px;background:#f0f0f0;border-top:1px solid #fff;border-left:1px solid #fff;border-right:1px solid #696969;border-bottom:1px solid #696969;box-shadow:inset -1px -1px 0 #a0a0a0, inset 1px 1px 0 #e3e3e3;"></div>
<div style="left:543.0px;top:458.9px;width:76px;height:20px;line-height:20px;font-size:14.3px;text-align:center;white-space:nowrap;font-family:Liberation Serif;color:#111;">Auto</div>
<div style="left:543px;top:484.2px;width:76px;height:23.600000000000023px;background:#f0f0f0;border-top:1px solid #fff;border-left:1px solid #fff;border-right:1px solid #696969;border-bottom:1px solid #696969;box-shadow:inset -1px -1px 0 #a0a0a0, inset 1px 1px 0 #e3e3e3;"></div>
<div style="left:543.0px;top:486.0px;width:76px;height:20px;line-height:20px;font-size:14.3px;text-align:center;white-space:nowrap;font-family:Liberation Serif;color:#111;">Robot 36</div>
<div style="left:543px;top:508px;width:76px;height:23.299999999999955px;background:#f0f0f0;border-top:1px solid #fff;border-left:1px solid #fff;border-right:1px solid #696969;border-bottom:1px solid #696969;box-shadow:inset -1px -1px 0 #a0a0a0, inset 1px 1px 0 #e3e3e3;"></div>
<div style="left:543.0px;top:509.65px;width:76px;height:20px;line-height:20px;font-size:14.3px;text-align:center;white-space:nowrap;font-family:Liberation Serif;color:#111;">Robot 72</div>
<div style="left:543px;top:531.3px;width:76px;height:24.200000000000045px;background:#f0f0f0;border-top:1px solid #fff;border-left:1px solid #fff;border-right:1px solid #696969;border-bottom:1px solid #696969;box-shadow:inset -1px -1px 0 #a0a0a0, inset 1px 1px 0 #e3e3e3;"></div>
<div style="left:543.0px;top:533.4px;width:76px;height:20px;line-height:20px;font-size:14.3px;text-align:center;white-space:nowrap;font-family:Liberation Serif;color:#111;">AVT 90</div>
<div style="left:543px;top:557px;width:76px;height:22px;background:#f0f0f0;border-top:1px solid #fff;border-left:1px solid #fff;border-right:1px solid #696969;border-bottom:1px solid #696969;box-shadow:inset -1px -1px 0 #a0a0a0, inset 1px 1px 0 #e3e3e3;"></div>
<div style="left:543.0px;top:558.0px;width:76px;height:20px;line-height:20px;font-size:14.3px;text-align:center;white-space:nowrap;font-family:Liberation Serif;color:#111;">Scottie 1</div>
<div style="left:543px;top:580px;width:76px;height:23px;background:#f0f0f0;border-top:1px solid #fff;border-left:1px solid #fff;border-right:1px solid #696969;border-bottom:1px solid #696969;box-shadow:inset -1px -1px 0 #a0a0a0, inset 1px 1px 0 #e3e3e3;"></div>
<div style="left:543.0px;top:581.5px;width:76px;height:20px;line-height:20px;font-size:14.3px;text-align:center;white-space:nowrap;font-family:Liberation Serif;color:#111;">Scottie 2</div>
<div style="left:543px;top:604px;width:76px;height:23px;background:#f0f0f0;border-top:1px solid #fff;border-left:1px solid #fff;border-right:1px solid #696969;border-bottom:1px solid #696969;box-shadow:inset -1px -1px 0 #a0a0a0, inset 1px 1px 0 #e3e3e3;"></div>
<div style="left:543.0px;top:605.5px;width:76px;height:20px;line-height:20px;font-size:14.3px;text-align:center;white-space:nowrap;font-family:Liberation Serif;color:#111;">ScottieDX</div>
<div style="left:543px;top:629.8px;width:76px;height:20.800000000000068px;background:#fbfbfb;border-top:1px solid #696969;border-left:1px solid #696969;border-right:1px solid #fff;border-bottom:1px solid #fff;box-shadow:inset 1px 1px 0 #a0a0a0;"></div>
<div style="left:543.0px;top:630.2px;width:76px;height:20px;line-height:20px;font-size:14.3px;text-align:center;white-space:nowrap;font-family:Liberation Serif;color:#111;">Martin 1</div>
<div style="left:543px;top:652px;width:76px;height:23px;background:#f0f0f0;border-top:1px solid #fff;border-left:1px solid #fff;border-right:1px solid #696969;border-bottom:1px solid #696969;box-shadow:inset -1px -1px 0 #a0a0a0, inset 1px 1px 0 #e3e3e3;"></div>
<div style="left:543.0px;top:653.5px;width:76px;height:20px;line-height:20px;font-size:14.3px;text-align:center;white-space:nowrap;font-family:Liberation Serif;color:#111;">Martin 2</div>
<div style="left:543px;top:677px;width:76px;height:23px;background:#f0f0f0;border-top:1px solid #fff;border-left:1px solid #fff;border-right:1px solid #696969;border-bottom:1px solid #696969;box-shadow:inset -1px -1px 0 #a0a0a0, inset 1px 1px 0 #e3e3e3;"></div>
<div style="left:543.0px;top:678.5px;width:76px;height:20px;line-height:20px;font-size:14.3px;text-align:center;white-space:nowrap;font-family:Liberation Serif;color:#111;">B/W 12</div>
<div style="left:540.4px;top:713px;width:81px;height:35px;border:1px solid #a0a0a0;box-shadow:1px 1px 0 #fff, inset 1px 1px 0 #fff;"></div>
<div style="left:546px;top:706px;width:30px;height:15px;background:#f0f0f0;"></div>
<div style="left:547.5px;top:704.0px;height:20px;line-height:20px;font-size:14.3px;white-space:nowrap;font-family:Liberation Serif;color:#111;">DSP</div>
<div style="left:544.3px;top:722.3px;width:37px;height:23.2px;background:#fbfbfb;border-top:1px solid #696969;border-left:1px solid #696969;border-right:1px solid #fff;border-bottom:1px solid #fff;box-shadow:inset 1px 1px 0 #a0a0a0;"></div>
<div style="left:544.5px;top:724.0px;width:37px;height:20px;line-height:20px;font-size:14.3px;text-align:center;white-space:nowrap;font-family:Liberation Serif;color:#111;">AFC</div>
<div style="left:582.7px;top:722.3px;width:36.3px;height:23.2px;background:#f0f0f0;border-top:1px solid #fff;border-left:1px solid #fff;border-right:1px solid #696969;border-bottom:1px solid #696969;box-shadow:inset -1px -1px 0 #a0a0a0, inset 1px 1px 0 #e3e3e3;"></div>
<div style="left:582.8px;top:724.5px;width:36px;height:20px;line-height:20px;font-size:12px;text-align:center;white-space:nowrap;color:#111;">LMS</div>
<div style="left:624px;top:448px;width:26px;height:135px;background:#000;border-top:1px solid #a0a0a0;border-left:1px solid #a0a0a0;border-right:1px solid #fff;border-bottom:1px solid #fff;box-shadow:inset 1px 1px 0 #696969, inset -1px -1px 0 #e3e3e3;"></div>
<div style="left:626px;top:568.5px;width:22px;height:12.7px;background:#00e400;"></div>
<div style="left:727px;top:428.1px;height:20px;line-height:20px;font-size:11px;white-space:nowrap;color:#111;">1200</div>
<div style="left:776.2px;top:428.1px;height:20px;line-height:20px;font-size:11px;white-space:nowrap;color:#111;">1500</div>
<div style="left:843.7px;top:428.1px;height:20px;line-height:20px;font-size:11px;white-space:nowrap;color:#111;">1900</div>
<div style="left:909.3px;top:428.1px;height:20px;line-height:20px;font-size:11px;white-space:nowrap;color:#111;">2300</div>
<div style="left:653.2px;top:446.9px;width:334.5px;height:92px;background:#ff8040;border-top:1px solid #a0a0a0;border-left:1px solid #a0a0a0;border-right:1px solid #fff;border-bottom:1px solid #fff;box-shadow:inset 1px 1px 0 #696969, inset -1px -1px 0 #e3e3e3;"></div>
<svg style="position:absolute;left:655px;top:448px;" width="331" height="91" viewBox="0 0 331 91"><line x1="83" y1="0" x2="83" y2="90" stroke="#40a040" stroke-width="1"/><line x1="266.20000000000005" y1="0" x2="266.20000000000005" y2="90" stroke="#ffff00" stroke-width="1"/><line x1="200.5" y1="0" x2="200.5" y2="90" stroke="#ffff00" stroke-width="1" stroke-dasharray="3 2"/><line x1="330" y1="0" x2="330" y2="90" stroke="#ffff00" stroke-width="1"/><polyline points="0.9,89.1 75.7,89.1 79.3,2.5 83.0,89.1 84.8,85.5 88.4,89.1 91.2,84.5 94.8,89.1 98.5,84.5 102.1,89.1 105.7,84.5 109.4,89.1 114.9,84.5 117.6,89.1 122.2,89.1 125.8,2.5 134.9,2.5 139.5,75.4 141.3,77.3 144.0,81.8 146.8,71.8 148.6,79.1 151.3,76.3 153.1,81.8 155.0,70.9 156.8,76.3 158.6,81.8 162.3,2.5 165.9,81.8 167.7,79.1 170.5,77.3 173.2,86.4 177.8,79.1 181.4,74.5 184.1,89.1 186.9,68.1 190.5,2.5 199.6,2.5 201.4,35.3 203.3,17.1 206.0,37.2 207.8,17.1 210.6,31.7 213.3,12.5 216.9,60.8 218.8,35.3 222.4,55.4 226.1,2.5 228.8,13.5 231.5,61.8 234.3,48.1 237.9,39.0 240.6,46.3 243.4,29.9 246.1,55.4 249.8,89.1 252.5,58.1 261.6,58.1 263.4,89.1 330.0,89.1" fill="none" stroke="#3018d0" stroke-width="1.7"/><path d="M79.5 3 L82 9 L77 9 Z" fill="#2020e0" stroke="#fff" stroke-width="0.5"/></svg>
<div style="left:653.2px;top:541px;width:334.5px;height:41px;background:#000;border-top:1px solid #a0a0a0;border-left:1px solid #a0a0a0;border-right:1px solid #fff;border-bottom:1px solid #fff;box-shadow:inset 1px 1px 0 #696969, inset -1px -1px 0 #e3e3e3;"></div>
<svg style="position:absolute;left:655px;top:543.5px;" width="331" height="38" viewBox="0 0 331 38"><rect x="75.7" y="0" width="6.3" height="37.3" fill="#fff"/><rect x="122.0" y="0" width="11.0" height="37.3" fill="#fff"/><rect x="144.4" y="20.3" width="1.6" height="1.6" fill="#fff"/><rect x="144.4" y="31.0" width="1" height="1" fill="#fff"/><rect x="137.1" y="18.6" width="1" height="1" fill="#fff"/><rect x="134.6" y="11.0" width="1" height="1" fill="#fff"/><rect x="146.8" y="32.3" width="1" height="1" fill="#fff"/><rect x="148.4" y="14.4" width="1.6" height="1.6" fill="#fff"/><rect x="150.0" y="22.3" width="1" height="1" fill="#fff"/><rect x="149.1" y="30.2" width="1" height="1" fill="#fff"/><rect x="133.6" y="6.9" width="1" height="1" fill="#fff"/><rect x="148.5" y="28.2" width="1.3" height="1.3" fill="#fff"/><rect x="144.1" y="30.6" width="1" height="1" fill="#fff"/><rect x="149.6" y="18.1" width="1" height="1" fill="#fff"/><rect x="144.6" y="10.1" width="1" height="1" fill="#fff"/><rect x="151.5" y="11.4" width="1" height="1" fill="#fff"/><rect x="146.1" y="1.1" width="1" height="1" fill="#fff"/><rect x="143.0" y="30.7" width="1.6" height="1.6" fill="#fff"/><rect x="133.8" y="0.6" width="1" height="1" fill="#fff"/><rect x="137.9" y="33.7" width="1" height="1" fill="#fff"/><rect x="144.9" y="35.6" width="1.6" height="1.6" fill="#fff"/><rect x="143.5" y="20.6" width="1" height="1" fill="#fff"/><rect x="153.4" y="9.8" width="1" height="1" fill="#fff"/><rect x="140.6" y="0.5" width="1.6" height="1.6" fill="#fff"/><rect x="152.8" y="4.3" width="1" height="1" fill="#fff"/><rect x="151.4" y="0.4" width="1.6" height="1.6" fill="#fff"/><rect x="153.9" y="6.4" width="1" height="1" fill="#fff"/><rect x="144.3" y="6.9" width="1" height="1" fill="#fff"/><rect x="143.5" y="13.9" width="1.6" height="1.6" fill="#fff"/><rect x="143.6" y="7.7" width="1.3" height="1.3" fill="#fff"/><rect x="155.8" y="35.4" width="1.3" height="1.3" fill="#fff"/><rect x="159.4" y="0.7" width="1" height="1" fill="#fff"/><rect x="142.8" y="31.0" width="1" height="1" fill="#fff"/><rect x="133.2" y="5.3" width="1.6" height="1.6" fill="#fff"/><rect x="139.1" y="28.0" width="1.3" height="1.3" fill="#fff"/><rect x="154.8" y="14.0" width="1" height="1" fill="#fff"/><rect x="134.5" y="21.2" width="1" height="1" fill="#fff"/><rect x="132.4" y="13.4" width="1.6" height="1.6" fill="#fff"/><rect x="135.5" y="21.3" width="1" height="1" fill="#fff"/><rect x="155.8" y="6.6" width="1" height="1" fill="#fff"/><rect x="140.5" y="8.3" width="1" height="1" fill="#fff"/><rect x="151.9" y="5.8" width="1" height="1" fill="#fff"/><rect x="150.9" y="14.1" width="1.6" height="1.6" fill="#fff"/><rect x="148.6" y="15.3" width="1" height="1" fill="#fff"/><rect x="135.0" y="18.6" width="1.3" height="1.3" fill="#fff"/><rect x="138.6" y="25.6" width="1.3" height="1.3" fill="#fff"/><rect x="143.6" y="32.8" width="1.6" height="1.6" fill="#fff"/><rect x="140.1" y="6.4" width="1" height="1" fill="#fff"/><rect x="135.5" y="17.4" width="1" height="1" fill="#fff"/><rect x="139.7" y="33.3" width="1" height="1" fill="#fff"/><rect x="152.6" y="2.5" width="1.6" height="1.6" fill="#fff"/><rect x="144.3" y="2.2" width="1" height="1" fill="#fff"/><rect x="139.8" y="19.3" width="1" height="1" fill="#fff"/><rect x="134.5" y="5.0" width="1.6" height="1.6" fill="#fff"/><rect x="159.0" y="23.8" width="1" height="1" fill="#fff"/><rect x="148.2" y="33.5" width="1.6" height="1.6" fill="#fff"/><rect x="157.0" y="25.4" width="1" height="1" fill="#fff"/><rect x="132.6" y="23.1" width="1.6" height="1.6" fill="#fff"/><rect x="133.8" y="11.3" width="1" height="1" fill="#fff"/><rect x="159.5" y="2.7" width="1.3" height="1.3" fill="#fff"/><rect x="152.3" y="32.7" width="1" height="1" fill="#fff"/><rect x="153.8" y="33.2" width="1.3" height="1.3" fill="#fff"/><rect x="134.3" y="17.2" width="1" height="1" fill="#fff"/><rect x="156.0" y="15.1" width="1" height="1" fill="#fff"/><rect x="155.7" y="20.8" width="1.6" height="1.6" fill="#fff"/><rect x="142.4" y="0.5" width="1" height="1" fill="#fff"/><rect x="134.2" y="23.2" width="1.3" height="1.3" fill="#fff"/><rect x="156.2" y="26.4" width="1.6" height="1.6" fill="#fff"/><rect x="157.7" y="25.2" width="1.6" height="1.6" fill="#fff"/><rect x="144.1" y="30.4" width="1" height="1" fill="#fff"/><rect x="146.3" y="18.7" width="1.3" height="1.3" fill="#fff"/><rect x="148.5" y="17.5" width="1" height="1" fill="#fff"/><rect x="158.3" y="4.1" width="1.6" height="1.6" fill="#fff"/><rect x="139.0" y="0.4" width="1.3" height="1.3" fill="#fff"/><rect x="135.9" y="22.2" width="1" height="1" fill="#fff"/><rect x="152.7" y="12.4" width="1.6" height="1.6" fill="#fff"/><rect x="145.7" y="8.8" width="1.6" height="1.6" fill="#fff"/><rect x="150.3" y="7.2" width="1.6" height="1.6" fill="#fff"/><rect x="154.1" y="27.4" width="1" height="1" fill="#fff"/><rect x="156.2" y="14.0" width="1.3" height="1.3" fill="#fff"/><rect x="137.8" y="4.9" width="1.3" height="1.3" fill="#fff"/><rect x="155.0" y="30.8" width="1" height="1" fill="#fff"/><rect x="158.1" y="10.0" width="1" height="1" fill="#fff"/><rect x="135.1" y="17.1" width="1" height="1" fill="#fff"/><rect x="154.8" y="13.9" width="1.6" height="1.6" fill="#fff"/><rect x="150.5" y="26.0" width="1.6" height="1.6" fill="#fff"/><rect x="140.8" y="30.1" width="1.3" height="1.3" fill="#fff"/><rect x="156.0" y="1.5" width="1.3" height="1.3" fill="#fff"/><rect x="147.7" y="11.2" width="1" height="1" fill="#fff"/><rect x="149.6" y="14.7" width="1" height="1" fill="#fff"/><rect x="132.7" y="30.1" width="1" height="1" fill="#fff"/><rect x="153.4" y="28.9" width="1" height="1" fill="#fff"/><rect x="144.3" y="22.9" width="1.3" height="1.3" fill="#fff"/><rect x="158.4" y="24.8" width="1" height="1" fill="#fff"/><rect x="154.7" y="9.3" width="1" height="1" fill="#fff"/><rect x="152.8" y="19.4" width="1" height="1" fill="#fff"/><rect x="136.9" y="9.9" width="1.3" height="1.3" fill="#fff"/><rect x="146.8" y="34.4" width="1" height="1" fill="#fff"/><rect x="142.8" y="28.7" width="1" height="1" fill="#fff"/><rect x="134.4" y="33.9" width="1.6" height="1.6" fill="#fff"/><rect x="135.6" y="16.5" width="1" height="1" fill="#fff"/><rect x="142.4" y="20.6" width="1.3" height="1.3" fill="#fff"/><rect x="144.8" y="23.6" width="1" height="1" fill="#fff"/><rect x="134.7" y="31.4" width="1" height="1" fill="#fff"/><rect x="137.9" y="32.7" width="1" height="1" fill="#fff"/><rect x="158.9" y="19.5" width="1.3" height="1.3" fill="#fff"/><rect x="139.2" y="26.1" width="1" height="1" fill="#fff"/><rect x="141.6" y="3.0" width="1.6" height="1.6" fill="#fff"/><rect x="141.4" y="15.3" width="1.3" height="1.3" fill="#fff"/><rect x="145.4" y="1.0" width="1" height="1" fill="#fff"/><rect x="143.8" y="1.3" width="1.3" height="1.3" fill="#fff"/><rect x="150.9" y="33.3" width="1.6" height="1.6" fill="#fff"/><rect x="136.1" y="18.7" width="1.6" height="1.6" fill="#fff"/><rect x="158.0" y="17.9" width="1" height="1" fill="#fff"/><rect x="152.8" y="16.0" width="1.3" height="1.3" fill="#fff"/><rect x="154.9" y="20.4" width="1" height="1" fill="#fff"/><rect x="146.4" y="30.6" width="1.3" height="1.3" fill="#fff"/><rect x="140.6" y="13.8" width="1" height="1" fill="#fff"/><rect x="140.4" y="5.1" width="1.3" height="1.3" fill="#fff"/><rect x="147.8" y="7.3" width="1" height="1" fill="#fff"/><rect x="145.8" y="22.0" width="1" height="1" fill="#fff"/><rect x="146.8" y="1.6" width="1.6" height="1.6" fill="#fff"/><rect x="147.0" y="35.9" width="1" height="1" fill="#fff"/><rect x="145.5" y="25.1" width="1" height="1" fill="#fff"/><rect x="157.6" y="16.7" width="1.6" height="1.6" fill="#fff"/><rect x="139.4" y="17.2" width="1" height="1" fill="#fff"/><rect x="141.3" y="32.7" width="1.6" height="1.6" fill="#fff"/><rect x="146.4" y="3.9" width="1.6" height="1.6" fill="#fff"/><rect x="149.0" y="33.6" width="1" height="1" fill="#fff"/><rect x="151.3" y="35.5" width="1" height="1" fill="#fff"/><rect x="159.5" y="0" width="4.5" height="37.3" fill="#fff"/><rect x="167.7" y="8.2" width="1.3" height="1.3" fill="#fff"/><rect x="170.7" y="12.9" width="1.6" height="1.6" fill="#fff"/><rect x="165.5" y="26.5" width="1" height="1" fill="#fff"/><rect x="183.4" y="22.6" width="1" height="1" fill="#fff"/><rect x="179.8" y="31.9" width="1" height="1" fill="#fff"/><rect x="172.0" y="15.0" width="1" height="1" fill="#fff"/><rect x="175.9" y="31.4" width="1" height="1" fill="#fff"/><rect x="175.7" y="30.9" width="1" height="1" fill="#fff"/><rect x="168.6" y="26.9" width="1.3" height="1.3" fill="#fff"/><rect x="184.7" y="11.5" width="1.3" height="1.3" fill="#fff"/><rect x="184.4" y="7.1" width="1" height="1" fill="#fff"/><rect x="184.3" y="4.9" width="1" height="1" fill="#fff"/><rect x="166.2" y="3.2" width="1.6" height="1.6" fill="#fff"/><rect x="165.3" y="30.2" width="1.6" height="1.6" fill="#fff"/><rect x="176.0" y="25.6" width="1" height="1" fill="#fff"/><rect x="172.7" y="24.9" width="1" height="1" fill="#fff"/><rect x="165.3" y="20.7" width="1.3" height="1.3" fill="#fff"/><rect x="184.9" y="35.2" width="1" height="1" fill="#fff"/><rect x="179.9" y="23.0" width="1.3" height="1.3" fill="#fff"/><rect x="175.1" y="24.9" width="1" height="1" fill="#fff"/><rect x="182.3" y="17.5" width="1" height="1" fill="#fff"/><rect x="163.9" y="20.0" width="1.6" height="1.6" fill="#fff"/><rect x="166.5" y="6.7" width="1" height="1" fill="#fff"/><rect x="167.1" y="5.7" width="1.3" height="1.3" fill="#fff"/><rect x="185.2" y="3.5" width="1" height="1" fill="#fff"/><rect x="166.2" y="24.7" width="1" height="1" fill="#fff"/><rect x="181.4" y="11.9" width="1.6" height="1.6" fill="#fff"/><rect x="173.2" y="12.9" width="1" height="1" fill="#fff"/><rect x="177.4" y="0.5" width="1" height="1" fill="#fff"/><rect x="183.3" y="6.6" width="1.6" height="1.6" fill="#fff"/><rect x="171.6" y="13.4" width="1" height="1" fill="#fff"/><rect x="177.5" y="3.4" width="1" height="1" fill="#fff"/><rect x="170.8" y="3.1" width="1.6" height="1.6" fill="#fff"/><rect x="176.7" y="6.9" width="1.3" height="1.3" fill="#fff"/><rect x="182.3" y="9.4" width="1" height="1" fill="#fff"/><rect x="180.9" y="28.2" width="1.6" height="1.6" fill="#fff"/><rect x="166.2" y="12.0" width="1.3" height="1.3" fill="#fff"/><rect x="181.4" y="27.8" width="1.6" height="1.6" fill="#fff"/><rect x="168.0" y="6.7" width="1.3" height="1.3" fill="#fff"/><rect x="170.2" y="3.7" width="1.3" height="1.3" fill="#fff"/><rect x="186.8" y="32.8" width="1" height="1" fill="#fff"/><rect x="168.6" y="34.3" width="1.3" height="1.3" fill="#fff"/><rect x="171.1" y="23.9" width="1" height="1" fill="#fff"/><rect x="175.8" y="14.1" width="1.6" height="1.6" fill="#fff"/><rect x="178.4" y="25.5" width="1.6" height="1.6" fill="#fff"/><rect x="186.5" y="0.8" width="1" height="1" fill="#fff"/><rect x="180.7" y="9.3" width="1.6" height="1.6" fill="#fff"/><rect x="175.1" y="27.6" width="1.6" height="1.6" fill="#fff"/><rect x="163.3" y="9.4" width="1.3" height="1.3" fill="#fff"/><rect x="184.7" y="20.0" width="1.6" height="1.6" fill="#fff"/><rect x="186.2" y="20.6" width="1" height="1" fill="#fff"/><rect x="178.3" y="29.4" width="1" height="1" fill="#fff"/><rect x="176.2" y="24.3" width="1" height="1" fill="#fff"/><rect x="172.3" y="34.1" width="1.6" height="1.6" fill="#fff"/><rect x="174.3" y="6.1" width="1.6" height="1.6" fill="#fff"/><rect x="176.0" y="21.7" width="1.6" height="1.6" fill="#fff"/><rect x="185.7" y="15.3" width="1.6" height="1.6" fill="#fff"/><rect x="177.3" y="13.3" width="1.3" height="1.3" fill="#fff"/><rect x="174.6" y="9.8" width="1.3" height="1.3" fill="#fff"/><rect x="178.9" y="27.1" width="1" height="1" fill="#fff"/><rect x="163.3" y="8.9" width="1" height="1" fill="#fff"/><rect x="178.2" y="14.8" width="1.6" height="1.6" fill="#fff"/><rect x="164.3" y="11.4" width="1.6" height="1.6" fill="#fff"/><rect x="164.2" y="35.9" width="1.3" height="1.3" fill="#fff"/><rect x="164.8" y="32.9" width="1.6" height="1.6" fill="#fff"/><rect x="180.3" y="9.1" width="1" height="1" fill="#fff"/><rect x="164.1" y="3.6" width="1.6" height="1.6" fill="#fff"/><rect x="166.5" y="34.8" width="1" height="1" fill="#fff"/><rect x="177.5" y="4.2" width="1.6" height="1.6" fill="#fff"/><rect x="173.9" y="7.4" width="1" height="1" fill="#fff"/><rect x="171.6" y="5.6" width="1.3" height="1.3" fill="#fff"/><rect x="173.6" y="24.2" width="1.6" height="1.6" fill="#fff"/><rect x="177.4" y="23.2" width="1.6" height="1.6" fill="#fff"/><rect x="171.7" y="27.0" width="1" height="1" fill="#fff"/><rect x="185.9" y="26.7" width="1" height="1" fill="#fff"/><rect x="174.5" y="18.3" width="1.3" height="1.3" fill="#fff"/><rect x="181.8" y="22.7" width="1.3" height="1.3" fill="#fff"/><rect x="169.6" y="22.1" width="1" height="1" fill="#fff"/><rect x="178.2" y="27.3" width="1" height="1" fill="#fff"/><rect x="185.8" y="18.2" width="1" height="1" fill="#fff"/><rect x="184.1" y="1.4" width="1" height="1" fill="#fff"/><rect x="163.2" y="9.4" width="1" height="1" fill="#fff"/><rect x="178.0" y="3.7" width="1.3" height="1.3" fill="#fff"/><rect x="164.7" y="3.1" width="1" height="1" fill="#fff"/><rect x="176.2" y="22.9" width="1.3" height="1.3" fill="#fff"/><rect x="174.6" y="12.9" width="1.3" height="1.3" fill="#fff"/><rect x="171.2" y="27.0" width="1" height="1" fill="#fff"/><rect x="182.3" y="16.2" width="1" height="1" fill="#fff"/><rect x="173.7" y="27.1" width="1.6" height="1.6" fill="#fff"/><rect x="182.4" y="13.4" width="1.3" height="1.3" fill="#fff"/><rect x="170.0" y="27.6" width="1" height="1" fill="#fff"/><rect x="173.3" y="13.4" width="1" height="1" fill="#fff"/><rect x="174.1" y="11.8" width="1" height="1" fill="#fff"/><rect x="173.4" y="20.6" width="1.6" height="1.6" fill="#fff"/><rect x="170.2" y="28.2" width="1" height="1" fill="#fff"/><rect x="170.4" y="33.1" width="1" height="1" fill="#fff"/><rect x="179.7" y="18.0" width="1.3" height="1.3" fill="#fff"/><rect x="169.8" y="5.2" width="1.3" height="1.3" fill="#fff"/><rect x="178.8" y="11.9" width="1" height="1" fill="#fff"/><rect x="170.7" y="16.0" width="1.3" height="1.3" fill="#fff"/><rect x="173.5" y="29.2" width="1.3" height="1.3" fill="#fff"/><rect x="174.0" y="8.0" width="1" height="1" fill="#fff"/><rect x="165.0" y="30.1" width="1" height="1" fill="#fff"/><rect x="171.7" y="14.4" width="1.6" height="1.6" fill="#fff"/><rect x="182.1" y="26.8" width="1.3" height="1.3" fill="#fff"/><rect x="182.1" y="19.6" width="1" height="1" fill="#fff"/><rect x="167.2" y="27.5" width="1.3" height="1.3" fill="#fff"/><rect x="182.5" y="8.0" width="1" height="1" fill="#fff"/><rect x="176.1" y="20.6" width="1" height="1" fill="#fff"/><rect x="178.6" y="29.2" width="1" height="1" fill="#fff"/><rect x="177.0" y="11.1" width="1" height="1" fill="#fff"/><rect x="187.0" y="0" width="60.0" height="37.3" fill="#fff"/><rect x="207.1" y="3.6" width="1" height="1" fill="#000"/><rect x="193.3" y="4.1" width="1" height="1" fill="#000"/><rect x="188.6" y="8.5" width="1" height="1" fill="#000"/><rect x="192.8" y="10.7" width="1" height="1" fill="#000"/><rect x="212.3" y="9.3" width="1" height="1" fill="#000"/><rect x="216.3" y="11.9" width="1" height="1" fill="#000"/><rect x="207.3" y="6.0" width="1" height="1" fill="#000"/><rect x="208.0" y="10.5" width="1" height="1" fill="#000"/><rect x="207.0" y="1.8" width="1" height="1" fill="#000"/><rect x="216.3" y="10.5" width="1" height="1" fill="#000"/><rect x="191.3" y="8.1" width="1" height="1" fill="#000"/><rect x="189.8" y="9.9" width="1" height="1" fill="#000"/><rect x="246.1" y="4.6" width="1" height="1" fill="#000"/><rect x="187.2" y="4.9" width="1" height="1" fill="#000"/><rect x="192.4" y="6.1" width="1" height="1" fill="#000"/><rect x="219.5" y="0.3" width="1" height="1" fill="#000"/><rect x="208.7" y="0.1" width="1" height="1" fill="#000"/><rect x="193.6" y="12.1" width="1" height="1" fill="#000"/><rect x="241.9" y="3.2" width="1" height="1" fill="#000"/><rect x="196.7" y="8.3" width="1" height="1" fill="#000"/><rect x="228.0" y="4.2" width="1" height="1" fill="#000"/><rect x="210.4" y="6.9" width="1" height="1" fill="#000"/><rect x="203.4" y="11.6" width="1" height="1" fill="#000"/><rect x="215.3" y="9.5" width="1" height="1" fill="#000"/><rect x="205.2" y="2.0" width="1" height="1" fill="#000"/><rect x="242.2" y="11.9" width="1" height="1" fill="#000"/><rect x="232.2" y="0.2" width="1" height="1" fill="#000"/><rect x="215.9" y="10.4" width="1" height="1" fill="#000"/><rect x="205.8" y="2.6" width="1" height="1" fill="#000"/><rect x="208.6" y="7.7" width="1" height="1" fill="#000"/><rect x="223.0" y="6.2" width="1" height="1" fill="#000"/><rect x="217.5" y="5.8" width="1" height="1" fill="#000"/><rect x="240.7" y="5.3" width="1" height="1" fill="#000"/><rect x="241.6" y="12.2" width="1" height="1" fill="#000"/><rect x="224.6" y="12.3" width="1" height="1" fill="#000"/><rect x="220.0" y="11.1" width="1" height="1" fill="#000"/><rect x="216.1" y="5.3" width="1" height="1" fill="#000"/><rect x="244.3" y="8.6" width="1" height="1" fill="#000"/><rect x="233.3" y="1.2" width="1" height="1" fill="#000"/><rect x="238.8" y="5.2" width="1" height="1" fill="#000"/><rect x="200.0" y="1.8" width="1" height="1" fill="#000"/><rect x="234.9" y="12.7" width="1" height="1" fill="#000"/><rect x="234.7" y="10.1" width="1" height="1" fill="#000"/><rect x="234.3" y="0.8" width="1" height="1" fill="#000"/><rect x="262.6" y="32.4" width="1.6" height="1.6" fill="#fff"/><rect x="262.3" y="16.3" width="1" height="1" fill="#fff"/><rect x="258.8" y="22.0" width="1" height="1" fill="#fff"/><rect x="253.5" y="28.0" width="1" height="1" fill="#fff"/><rect x="250.7" y="31.6" width="1" height="1" fill="#fff"/><rect x="257.5" y="36.1" width="1.3" height="1.3" fill="#fff"/><rect x="255.3" y="1.9" width="1" height="1" fill="#fff"/><rect x="246.0" y="29.8" width="1" height="1" fill="#fff"/><rect x="260.8" y="3.0" width="1.3" height="1.3" fill="#fff"/><rect x="257.1" y="19.2" width="1.6" height="1.6" fill="#fff"/><rect x="258.5" y="3.0" width="1.3" height="1.3" fill="#fff"/><rect x="246.3" y="6.8" width="1" height="1" fill="#fff"/><rect x="262.5" y="3.3" width="1.6" height="1.6" fill="#fff"/><rect x="249.8" y="19.7" width="1.6" height="1.6" fill="#fff"/><rect x="248.8" y="30.2" width="1.3" height="1.3" fill="#fff"/><rect x="251.7" y="14.7" width="1.3" height="1.3" fill="#fff"/><rect x="264.0" y="24.2" width="1" height="1" fill="#fff"/><rect x="252.5" y="24.9" width="1" height="1" fill="#fff"/><rect x="258.0" y="24.5" width="1" height="1" fill="#fff"/><rect x="257.8" y="0.4" width="1.6" height="1.6" fill="#fff"/><rect x="258.8" y="17.3" width="1.3" height="1.3" fill="#fff"/><rect x="256.2" y="16.6" width="1" height="1" fill="#fff"/><rect x="261.4" y="30.7" width="1" height="1" fill="#fff"/><rect x="262.2" y="5.5" width="1.6" height="1.6" fill="#fff"/><rect x="262.9" y="27.2" width="1.3" height="1.3" fill="#fff"/><rect x="259.6" y="20.2" width="1" height="1" fill="#fff"/><rect x="250.6" y="7.3" width="1" height="1" fill="#fff"/><rect x="251.9" y="34.3" width="1.6" height="1.6" fill="#fff"/><rect x="259.0" y="12.0" width="1.6" height="1.6" fill="#fff"/><rect x="247.7" y="5.1" width="1" height="1" fill="#fff"/><rect x="248.4" y="22.9" width="1" height="1" fill="#fff"/><rect x="249.2" y="14.6" width="1.6" height="1.6" fill="#fff"/><rect x="256.7" y="3.3" width="1" height="1" fill="#fff"/><rect x="246.6" y="35.8" width="1.6" height="1.6" fill="#fff"/><rect x="253.3" y="2.6" width="1.6" height="1.6" fill="#fff"/><rect x="262.7" y="5.0" width="1" height="1" fill="#fff"/><rect x="259.8" y="29.8" width="1.6" height="1.6" fill="#fff"/><rect x="254.7" y="33.4" width="1" height="1" fill="#fff"/><rect x="259.1" y="22.3" width="1.3" height="1.3" fill="#fff"/><rect x="263.7" y="28.7" width="1" height="1" fill="#fff"/><rect x="250.7" y="6.9" width="1.3" height="1.3" fill="#fff"/><rect x="257.7" y="3.9" width="1.6" height="1.6" fill="#fff"/><rect x="249.7" y="12.1" width="1.3" height="1.3" fill="#fff"/><rect x="260.9" y="22.2" width="1" height="1" fill="#fff"/><rect x="250.6" y="19.6" width="1.3" height="1.3" fill="#fff"/><rect x="255.9" y="12.8" width="1" height="1" fill="#fff"/><rect x="256.3" y="7.2" width="1" height="1" fill="#fff"/><rect x="256.2" y="1.0" width="1" height="1" fill="#fff"/><rect x="260.0" y="4.9" width="1.6" height="1.6" fill="#fff"/><rect x="256.4" y="25.3" width="1.3" height="1.3" fill="#fff"/><rect x="247.7" y="31.7" width="1.3" height="1.3" fill="#fff"/><rect x="254.3" y="4.5" width="1" height="1" fill="#fff"/><rect x="250.3" y="20.7" width="1" height="1" fill="#fff"/><rect x="256.1" y="9.6" width="1.3" height="1.3" fill="#fff"/><rect x="256.8" y="4.5" width="1" height="1" fill="#fff"/><rect x="251.2" y="32.6" width="1" height="1" fill="#fff"/><rect x="259.6" y="13.2" width="1" height="1" fill="#fff"/><rect x="249.3" y="19.9" width="1" height="1" fill="#fff"/><rect x="254.2" y="14.6" width="1" height="1" fill="#fff"/><rect x="251.5" y="24.4" width="1.6" height="1.6" fill="#fff"/><rect x="257.1" y="23.2" width="1" height="1" fill="#fff"/><rect x="248.9" y="15.0" width="1" height="1" fill="#fff"/><rect x="248.6" y="14.0" width="1.6" height="1.6" fill="#fff"/><rect x="249.1" y="18.9" width="1.3" height="1.3" fill="#fff"/><rect x="250.4" y="33.8" width="1" height="1" fill="#fff"/><rect x="257.6" y="1.4" width="1" height="1" fill="#fff"/><rect x="253.3" y="18.1" width="1" height="1" fill="#fff"/><rect x="254.5" y="14.9" width="1.6" height="1.6" fill="#fff"/><rect x="259.5" y="17.6" width="1.6" height="1.6" fill="#fff"/><rect x="261.1" y="31.0" width="1.6" height="1.6" fill="#fff"/><rect x="260.9" y="4.3" width="1" height="1" fill="#fff"/><rect x="262.3" y="19.1" width="1.6" height="1.6" fill="#fff"/><rect x="253.6" y="0.9" width="1" height="1" fill="#fff"/><rect x="251.3" y="22.4" width="1.6" height="1.6" fill="#fff"/><rect x="259.2" y="21.7" width="1.3" height="1.3" fill="#fff"/><rect x="261.9" y="31.8" width="1" height="1" fill="#fff"/><rect x="248.2" y="16.2" width="1.6" height="1.6" fill="#fff"/><rect x="263.5" y="17.3" width="1" height="1" fill="#fff"/><rect x="255.5" y="8.7" width="1.3" height="1.3" fill="#fff"/><rect x="257.8" y="34.1" width="1" height="1" fill="#fff"/><rect x="264.0" y="26.5" width="1.3" height="1.3" fill="#fff"/><rect x="261.6" y="15.3" width="1" height="1" fill="#fff"/><rect x="251.0" y="0" width="13.0" height="13.1" fill="#fff"/><rect x="264.0" y="0" width="2.0" height="37.3" fill="#fff"/></svg>
<div style="left:623.7px;top:594px;width:365px;height:154px;border:1px solid #a0a0a0;box-shadow:1px 1px 0 #fff, inset 1px 1px 0 #fff;"></div>
<div style="left:629px;top:587px;width:28px;height:15px;background:#f0f0f0;"></div>
<div style="left:631px;top:585.0px;height:20px;line-height:20px;font-size:14.3px;white-space:nowrap;font-family:Liberation Serif;color:#111;">Log</div>
<div style="left:605.2px;top:607.0px;width:60px;height:20px;line-height:20px;font-size:14.3px;text-align:right;white-space:nowrap;font-family:Liberation Serif;color:#111;"><u>C</u>all</div>
<div style="left:669.8px;top:605.7px;width:105px;height:22.5px;background:#fff;border-top:1px solid #a0a0a0;border-left:1px solid #a0a0a0;border-right:1px solid #fff;border-bottom:1px solid #fff;box-shadow:inset 1px 1px 0 #696969, inset -1px -1px 0 #e3e3e3;"></div>
<div style="left:791.8px;top:607.0px;height:20px;line-height:20px;font-size:14.3px;white-space:nowrap;font-family:Liberation Serif;color:#111;">His</div>
<div style="left:815.3px;top:605.7px;width:68.4px;height:22.5px;background:#fff;border-top:1px solid #a0a0a0;border-left:1px solid #a0a0a0;border-right:1px solid #fff;border-bottom:1px solid #fff;box-shadow:inset 1px 1px 0 #696969, inset -1px -1px 0 #e3e3e3;"></div>
<div style="left:818px;top:606.5px;height:20px;line-height:20px;font-size:13.5px;white-space:nowrap;font-family:Liberation Serif;color:#111;">595</div>
<div style="left:867px;top:607.7px;width:15px;height:18.5px;background:#f0f0f0;border-top:1px solid #fff;border-left:1px solid #fff;border-right:1px solid #696969;border-bottom:1px solid #696969;box-shadow:inset -1px -1px 0 #a0a0a0, inset 1px 1px 0 #e3e3e3;"></div>
<svg style="position:absolute;left:870.5px;top:615px;" width="8" height="5" viewBox="0 0 8 5"><path d="M0 0 L8 0 L4 4 Z" fill="#111"/></svg>
<div style="left:888.3px;top:607.0px;height:20px;line-height:20px;font-size:14.3px;white-space:nowrap;font-family:Liberation Serif;color:#111;">My</div>
<div style="left:914.4px;top:605.7px;width:68.3px;height:22.5px;background:#fff;border-top:1px solid #a0a0a0;border-left:1px solid #a0a0a0;border-right:1px solid #fff;border-bottom:1px solid #fff;box-shadow:inset 1px 1px 0 #696969, inset -1px -1px 0 #e3e3e3;"></div>
<div style="left:966px;top:607.7px;width:15px;height:18.5px;background:#f0f0f0;border-top:1px solid #fff;border-left:1px solid #fff;border-right:1px solid #696969;border-bottom:1px solid #696969;box-shadow:inset -1px -1px 0 #a0a0a0, inset 1px 1px 0 #e3e3e3;"></div>
<svg style="position:absolute;left:969.5px;top:615px;" width="8" height="5" viewBox="0 0 8 5"><path d="M0 0 L8 0 L4 4 Z" fill="#111"/></svg>
<div style="left:605.2px;top:634.3px;width:60px;height:20px;line-height:20px;font-size:14.3px;text-align:right;white-space:nowrap;font-family:Liberation Serif;color:#111;"><u>N</u>ame</div>
<div style="left:669.8px;top:632.8px;width:105px;height:20.5px;background:#fff;border-top:1px solid #a0a0a0;border-left:1px solid #a0a0a0;border-right:1px solid #fff;border-bottom:1px solid #fff;box-shadow:inset 1px 1px 0 #696969, inset -1px -1px 0 #e3e3e3;"></div>
<div style="left:780.8px;top:634.3px;height:20px;line-height:20px;font-size:14.3px;white-space:nowrap;font-family:Liberation Serif;color:#111;"><u>Q</u>TH</div>
<div style="left:815.3px;top:632.8px;width:167.4px;height:20.5px;background:#fff;border-top:1px solid #a0a0a0;border-left:1px solid #a0a0a0;border-right:1px solid #fff;border-bottom:1px solid #fff;box-shadow:inset 1px 1px 0 #696969, inset -1px -1px 0 #e3e3e3;"></div>
<div style="left:605.2px;top:660.6px;width:60px;height:20px;line-height:20px;font-size:14.3px;text-align:right;white-space:nowrap;font-family:Liberation Serif;color:#111;">Note</div>
<div style="left:669.8px;top:660px;width:313px;height:20.5px;background:#fff;border-top:1px solid #a0a0a0;border-left:1px solid #a0a0a0;border-right:1px solid #fff;border-bottom:1px solid #fff;box-shadow:inset 1px 1px 0 #696969, inset -1px -1px 0 #e3e3e3;"></div>
<div style="left:605.2px;top:687.3px;width:60px;height:20px;line-height:20px;font-size:14.3px;text-align:right;white-space:nowrap;font-family:Liberation Serif;color:#111;">QSL</div>
<div style="left:669.8px;top:687px;width:214.5px;height:20.6px;background:#fff;border-top:1px solid #a0a0a0;border-left:1px solid #a0a0a0;border-right:1px solid #fff;border-bottom:1px solid #fff;box-shadow:inset 1px 1px 0 #696969, inset -1px -1px 0 #e3e3e3;"></div>
<div style="left:889.3px;top:686.5px;width:47.2px;height:24.1px;background:#f0f0f0;border-top:1px solid #fff;border-left:1px solid #fff;border-right:1px solid #696969;border-bottom:1px solid #696969;box-shadow:inset -1px -1px 0 #a0a0a0, inset 1px 1px 0 #e3e3e3;"></div>
<div style="left:889.4px;top:688.5px;width:47px;height:20px;line-height:20px;font-size:14.3px;text-align:center;white-space:nowrap;font-family:Liberation Serif;color:#111;">RXID</div>
<div style="left:936.5px;top:686.5px;width:47.6px;height:24.1px;background:#f0f0f0;border-top:1px solid #fff;border-left:1px solid #fff;border-right:1px solid #696969;border-bottom:1px solid #696969;box-shadow:inset -1px -1px 0 #a0a0a0, inset 1px 1px 0 #e3e3e3;"></div>
<svg style="position:absolute;left:948px;top:690px;" width="22" height="17" viewBox="0 0 22 17"><text x="0" y="6" font-size="6" font-family="Liberation Mono" fill="#999">ABC</text><rect x="8" y="7" width="9" height="8" fill="none" stroke="#aaa"/></svg>
<div style="left:631.7px;top:717.6px;width:46.59999999999991px;height:23.1px;background:#f0f0f0;border-top:1px solid #fff;border-left:1px solid #fff;border-right:1px solid #696969;border-bottom:1px solid #696969;box-shadow:inset -1px -1px 0 #a0a0a0, inset 1px 1px 0 #e3e3e3;"></div>
<div style="left:631.7px;top:719.2px;width:46.59999999999991px;height:20px;line-height:20px;font-size:14.3px;text-align:center;white-space:nowrap;font-family:Liberation Serif;color:#a0a0a0;">QSO</div>
<div style="left:678.3px;top:717.6px;width:48.200000000000045px;height:23.1px;background:#f0f0f0;border-top:1px solid #fff;border-left:1px solid #fff;border-right:1px solid #696969;border-bottom:1px solid #696969;box-shadow:inset -1px -1px 0 #a0a0a0, inset 1px 1px 0 #e3e3e3;"></div>
<div style="left:678.3px;top:719.2px;width:48.200000000000045px;height:20px;line-height:20px;font-size:14.3px;text-align:center;white-space:nowrap;font-family:Liberation Serif;color:#111;">Data</div>
<div style="left:726.5px;top:717.6px;width:48.60000000000002px;height:23.1px;background:#f0f0f0;border-top:1px solid #fff;border-left:1px solid #fff;border-right:1px solid #696969;border-bottom:1px solid #696969;box-shadow:inset -1px -1px 0 #a0a0a0, inset 1px 1px 0 #e3e3e3;"></div>
<div style="left:726.5px;top:719.2px;width:48.60000000000002px;height:20px;line-height:20px;font-size:14.3px;text-align:center;white-space:nowrap;font-family:Liberation Serif;color:#a0a0a0;">Find</div>
<div style="left:775.1px;top:717.6px;width:48.299999999999955px;height:23.1px;background:#f0f0f0;border-top:1px solid #fff;border-left:1px solid #fff;border-right:1px solid #696969;border-bottom:1px solid #696969;box-shadow:inset -1px -1px 0 #a0a0a0, inset 1px 1px 0 #e3e3e3;"></div>
<div style="left:775.1px;top:719.2px;width:48.299999999999955px;height:20px;line-height:20px;font-size:14.3px;text-align:center;white-space:nowrap;font-family:Liberation Serif;color:#111;">Clear</div>
<div style="left:823.4px;top:717.6px;width:47.80000000000007px;height:23.1px;background:#f0f0f0;border-top:1px solid #fff;border-left:1px solid #fff;border-right:1px solid #696969;border-bottom:1px solid #696969;box-shadow:inset -1px -1px 0 #a0a0a0, inset 1px 1px 0 #e3e3e3;"></div>
<div style="left:823.3999999999999px;top:719.2px;width:47.80000000000007px;height:20px;line-height:20px;font-size:14.3px;text-align:center;white-space:nowrap;font-family:Liberation Serif;color:#111;"><u>L</u>ist</div>
<div style="left:886.3px;top:718px;width:97.4px;height:21.7px;background:#fff;border-top:1px solid #a0a0a0;border-left:1px solid #a0a0a0;border-right:1px solid #fff;border-bottom:1px solid #fff;box-shadow:inset 1px 1px 0 #696969, inset -1px -1px 0 #e3e3e3;"></div>
<div style="left:889px;top:718.5px;height:20px;line-height:20px;font-size:13.5px;white-space:nowrap;font-family:Liberation Serif;color:#111;">14.230</div>
<div style="left:966px;top:720px;width:15.5px;height:18px;background:#f0f0f0;border-top:1px solid #fff;border-left:1px solid #fff;border-right:1px solid #696969;border-bottom:1px solid #696969;box-shadow:inset -1px -1px 0 #a0a0a0, inset 1px 1px 0 #e3e3e3;"></div>
<svg style="position:absolute;left:969.5px;top:727px;" width="8" height="5" viewBox="0 0 8 5"><path d="M0 0 L8 0 L4 4 Z" fill="#111"/></svg>
<div style="left:543px;top:751px;width:447px;height:25px;border-top:1px solid #a0a0a0;box-shadow:inset 0 1px 0 #fff;border-bottom:1px solid #a0a0a0;"></div>
<div style="left:548.5px;top:757.7px;width:12px;height:12px;background:#fff;border:1px solid #666;box-shadow:inset 1px 1px 0 #999;"></div>
<div style="left:566px;top:753.0px;height:20px;line-height:20px;font-size:14.3px;white-space:nowrap;font-family:Liberation Serif;color:#111;">Show with template</div>
<div style="left:781.8px;top:757.8px;width:12px;height:12px;background:#f0f0f0;border:1px solid #aaa;"></div>
<svg style="position:absolute;left:783px;top:759px;" width="10" height="10" viewBox="0 0 10 10"><path d="M1.5 5 L4 8 L8.5 1.5" fill="none" stroke="#a0a0a0" stroke-width="1.6"/></svg>
<div style="left:800.5px;top:753.5px;height:20px;line-height:20px;font-size:14.3px;white-space:nowrap;font-family:Liberation Serif;color:#a0a0a0;">Draft</div>
<div style="left:908.4px;top:755.0px;height:20px;line-height:20px;font-size:14.3px;white-space:nowrap;font-family:Liberation Serif;color:#111;">1/25</div>
<div style="left:939.5px;top:753.8px;width:23.1px;height:20.1px;background:#f0f0f0;border-top:1px solid #fff;border-left:1px solid #fff;border-right:1px solid #696969;border-bottom:1px solid #696969;box-shadow:inset -1px -1px 0 #a0a0a0, inset 1px 1px 0 #e3e3e3;"></div>
<svg style="position:absolute;left:946px;top:759px;" width="6" height="9" viewBox="0 0 6 9"><path d="M6 0 L0 4.5 L6 9 Z" fill="#111"/></svg>
<div style="left:962.6px;top:753.8px;width:25.2px;height:20.1px;background:#f0f0f0;border-top:1px solid #fff;border-left:1px solid #fff;border-right:1px solid #696969;border-bottom:1px solid #696969;box-shadow:inset -1px -1px 0 #a0a0a0, inset 1px 1px 0 #e3e3e3;"></div>
<svg style="position:absolute;left:972px;top:759px;" width="6" height="9" viewBox="0 0 6 9"><path d="M0 0 L6 4.5 L0 9 Z" fill="#111"/></svg>
<div style="left:989px;top:374px;width:2px;height:598px;background:#fff;"></div>
<div style="left:199px;top:969px;width:792px;height:3px;background:#f8f8f8;border-bottom:1px solid #a0a0a0;"></div>
</body></html>
